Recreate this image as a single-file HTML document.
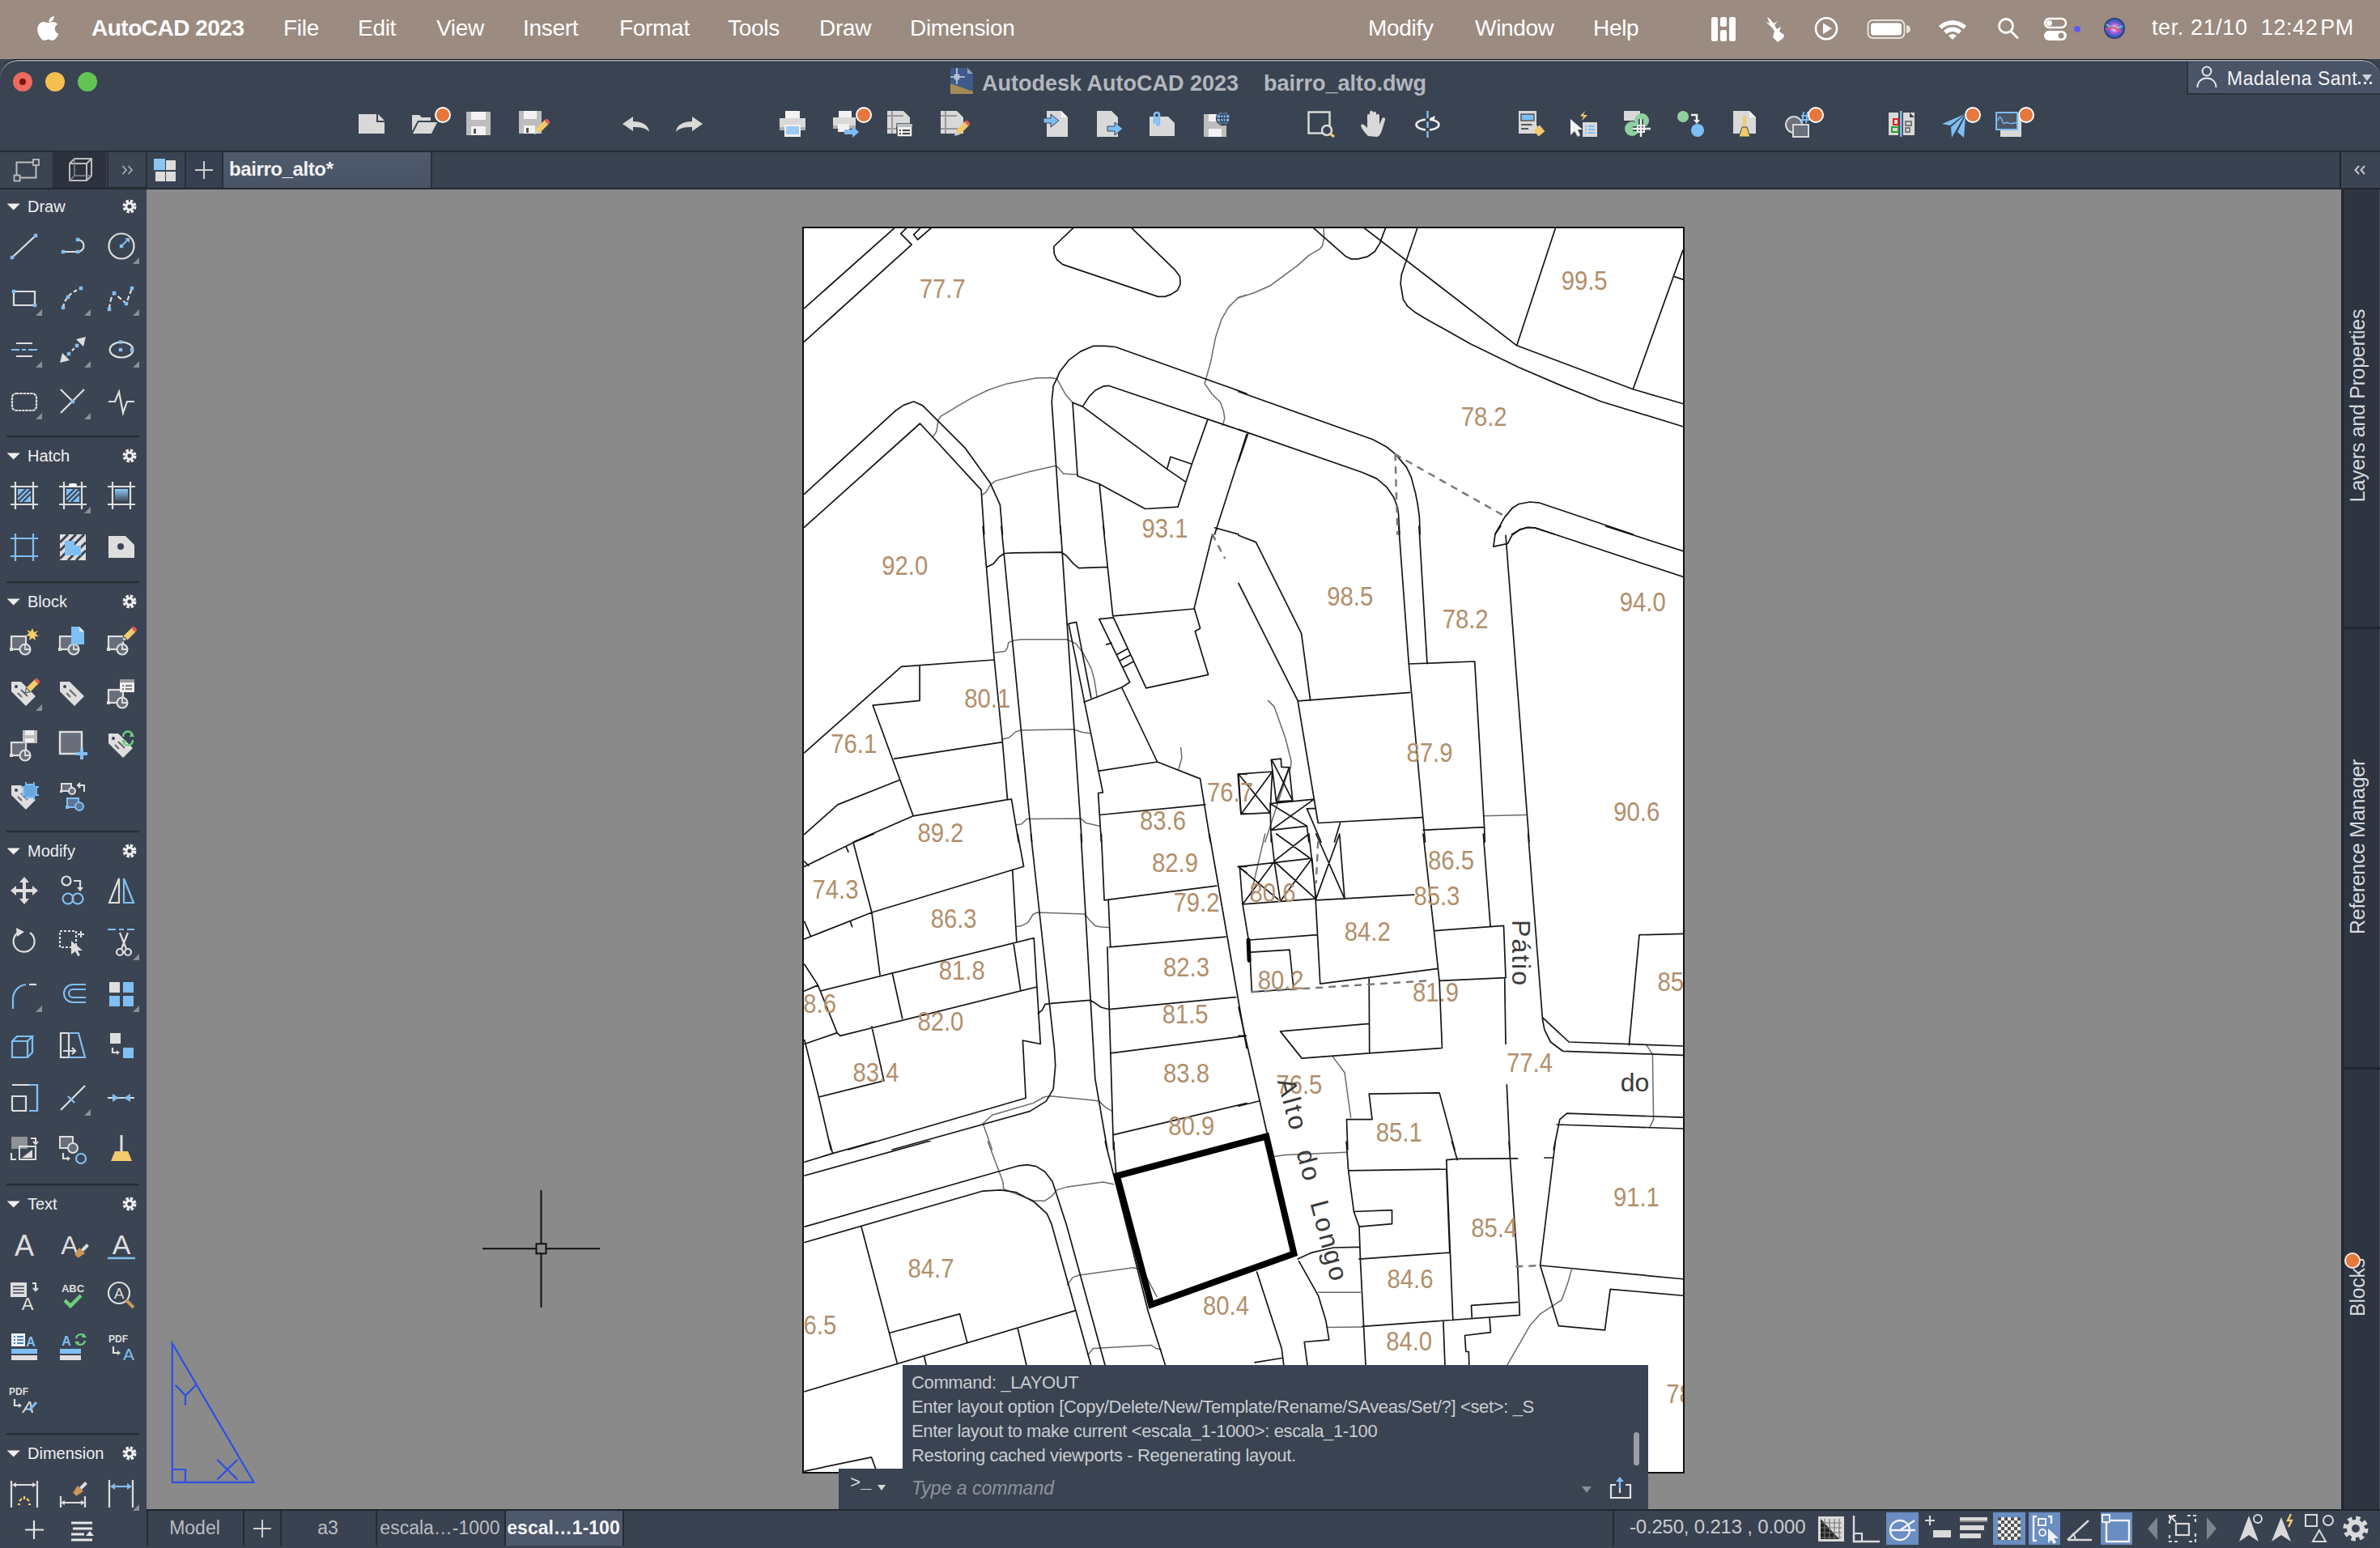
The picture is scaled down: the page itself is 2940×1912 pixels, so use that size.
<!DOCTYPE html>
<html><head><meta charset="utf-8">
<style>
*{margin:0;padding:0;box-sizing:border-box}
html,body{width:2940px;height:1912px;overflow:hidden;background:#3a4351;font-family:"Liberation Sans",sans-serif}
.a{position:absolute}
svg{overflow:visible}
#menubar{left:0;top:0;width:2940px;height:73px;background:#9b8b80;color:#fff;font-size:28px}
#menubar span{position:absolute;top:19px;white-space:nowrap;letter-spacing:-0.3px}
#win{left:0;top:73px;width:2940px;height:1839px;background:#3a4351;border-radius:22px 22px 0 0;border-top:1px solid #0a0a0a;box-shadow:inset 0 1px 0 #aeb5bf,inset 0 2px 0 #6a7280}
#title{top:88px;font-size:27px;font-weight:bold;color:#b3b7bf;white-space:nowrap}
#tbar{left:0;top:186px;width:2940px;height:2px;background:#242932}
#tabbar{left:0;top:188px;width:2892px;height:45px;background:#394250}
#tabline{left:0;top:232px;width:2940px;height:2px;background:#242932}
#canvas{left:181px;top:234px;width:2711px;height:1630px;background:#8a8a8a}
#left{left:0;top:234px;width:180px;height:1678px;background:#3b4452;border-radius:0 0 0 22px}
#rside{left:2892px;top:234px;width:48px;height:1630px;background:#2e3440;border-left:3px solid #212731;border-right:1px solid #4a505a}
#status{left:181px;top:1864px;width:2759px;height:48px;background:#394250;border-top:2px solid #20252d;border-radius:0 0 22px 0}
#paper{left:991px;top:280px;width:1090px;height:1540px;background:#fff;border:2px solid #111;overflow:hidden}
.sec{font-size:22px;color:#eef0f3;white-space:nowrap}
.sep{left:8px;width:164px;height:2px;background:#272c35}
.ico{position:absolute;width:40px;height:40px}
.cmdt{font-size:22px;color:#c9ccd2;white-space:nowrap;left:1126px}
.ltab{top:1866px;height:44px;background:#394250;border-left:2px solid #262b33;color:#b9bcc2;font-size:23px;text-align:center;line-height:44px;white-space:nowrap}
.sb{position:absolute;top:1868px;width:40px;height:40px}
.sba{background:#6b8fc4}
</style></head><body>
<div id="menubar" class="a">
  <svg class="a" style="left:45.5px;top:20px" width="28" height="34" viewBox="0 0 28 34"><path fill="#fff" d="M19.5 0c.3 2.3-.7 4.5-2 6-1.4 1.6-3.5 2.7-5.5 2.5-.3-2.2.8-4.5 2.1-5.9C15.5 1.1 17.8.1 19.5 0zM26 25.3c-.8 1.9-1.2 2.7-2.3 4.4-1.5 2.3-3.6 5.1-6.2 5.100-2.300 0-2.900-1.500-6-1.500s-3.800 1.500-6.100 1.500C2.800 34.800.8 32.300-.7 30-4.900 23.700-5.300 16.300-2.800 12.400-1 9.700 1.800 8 4.500 8c2.700 0 4.400 1.500 6.700 1.500 2.200 0 3.500-1.500 6.700-1.500 2.400 0 4.900 1.300 6.700 3.500-5.900 3.200-4.900 11.600 1.400 13.800z" transform="translate(4 0) scale(0.86)"/></svg>
  <span style="left:113px;font-weight:bold;letter-spacing:-0.5px">AutoCAD 2023</span>
  <span style="left:350px">File</span>
  <span style="left:442px">Edit</span>
  <span style="left:539px">View</span>
  <span style="left:646px">Insert</span>
  <span style="left:765px">Format</span>
  <span style="left:899px">Tools</span>
  <span style="left:1012px">Draw</span>
  <span style="left:1124px">Dimension</span>
  <span style="left:1690px">Modify</span>
  <span style="left:1822px">Window</span>
  <span style="left:1968px">Help</span>
  <span style="left:2658px;font-size:27px;letter-spacing:0.6px">ter. 21/10&nbsp;&nbsp;12:42&#8202;PM</span>
  <svg class="a" style="left:0;top:0" width="2940" height="73" viewBox="0 0 2940 73">
<rect x="2114" y="21" width="8" height="30" rx="2.5" fill="#ffffff"/><rect x="2136" y="21" width="8" height="30" rx="2.5" fill="#ffffff"/><rect x="2125" y="21" width="8" height="12" rx="2.5" fill="#ffffff"/><rect x="2125" y="37" width="8" height="14" rx="2.5" fill="#ffffff"/>
<path d="M2183 21L2186 29L2181 27L2188 33L2192 38L2190 46L2196 52L2203 47L2204 43L2198 39L2200 33L2195 36L2192 31L2196 26L2191 29L2187 24Z" fill="#ffffff"/>
<circle cx="2256" cy="35.3" r="13" fill="none" stroke="#ffffff" stroke-width="2.6"/><path d="M2252 28.5V42L2263 35.3Z" fill="#ffffff"/>
<rect x="2307.5" y="25" width="45" height="22" rx="6" fill="none" stroke="#e8e2dc" stroke-width="2"/><rect x="2311" y="28.5" width="38" height="15" rx="3.5" fill="#ffffff"/><path d="M2355 31V41A3 3 0 0 0 2355 31Z" fill="#e8e2dc"/>
<path d="M2395 32A25 25 0 0 1 2429 32L2425.5 36A20 20 0 0 0 2398.5 36Z" fill="#ffffff"/><path d="M2401 38A16 16 0 0 1 2423 38L2419.5 42A11 11 0 0 0 2404.5 42Z" fill="#ffffff"/><path d="M2407 44A7 7 0 0 1 2417 44L2412 49Z" fill="#ffffff"/>
<circle cx="2478" cy="32" r="8.5" fill="none" stroke="#ffffff" stroke-width="2.8"/><path d="M2484 38.5L2492 46.5" stroke="#ffffff" stroke-width="3" stroke-linecap="round"/>
<rect x="2526" y="23" width="26" height="11" rx="5.5" fill="none" stroke="#ffffff" stroke-width="2.4"/><circle cx="2531.5" cy="28.5" r="3.5" fill="#ffffff"/><rect x="2525" y="38" width="28" height="12" rx="6" fill="#ffffff"/><circle cx="2546" cy="44" r="3.5" fill="#9b8b80"/>
<circle cx="2566" cy="36" r="4" fill="#5f5cf0"/>
<defs><radialGradient id="siri" cx="0.5" cy="0.5" r="0.5"><stop offset="0" stop-color="#f0f0ff"/><stop offset="0.45" stop-color="#b05ad0"/><stop offset="0.8" stop-color="#2a5fc0"/><stop offset="1" stop-color="#3a2a60"/></radialGradient></defs><circle cx="2612" cy="35" r="13" fill="url(#siri)"/><path d="M2602 30Q2612 38 2622 32" stroke="#6fd0c0" stroke-width="2" fill="none"/><path d="M2601 37Q2610 30 2620 40" stroke="#e05080" stroke-width="2" fill="none"/>
</svg>
</div>
<div id="win" class="a"></div>
<!-- traffic lights -->
<div class="a" style="left:16px;top:89px;width:24px;height:24px;border-radius:50%;background:#ec6a5e"></div>
<div class="a" style="left:24px;top:97px;width:8px;height:8px;border-radius:50%;background:#7a1410"></div>
<div class="a" style="left:56px;top:89px;width:24px;height:24px;border-radius:50%;background:#f4bf4f"></div>
<div class="a" style="left:96px;top:89px;width:24px;height:24px;border-radius:50%;background:#61c554"></div>
<!-- title -->
<svg class="a" style="left:1174px;top:84px" width="28" height="32" viewBox="0 0 28 32"><path d="M0 0h21l7 7v25H0z" fill="#3d5a8a"/><path d="M0 19l28 10v3H0z" fill="#a48a55"/><path d="M0 21.5L28 31.5V32H0z" fill="#a48a55"/><path d="M8 0v20M0 11h18" stroke="#c8d2e0" stroke-width="1.6"/><rect x="5.5" y="8.5" width="5" height="5" fill="none" stroke="#c8d2e0" stroke-width="1.4"/><path d="M21 0v7h7" fill="#8fa3c0"/></svg>
<div id="title" class="a" style="left:1213px">Autodesk AutoCAD 2023</div>
<div id="title" class="a" style="left:1561px">bairro_alto.dwg</div>
<!-- user box -->
<div class="a" style="left:2701px;top:76px;width:239px;height:41px;background:#4a5467;border-left:2px solid #2c323c;border-bottom:2px solid #2c323c;border-radius:0 22px 0 0"></div>
<svg class="a" style="left:2712px;top:80px" width="28" height="30" viewBox="0 0 28 30"><circle cx="14" cy="8" r="5.5" fill="none" stroke="#e6e8ec" stroke-width="2"/><path d="M2.5 28c0-7 5-11.5 11.5-11.5S25.5 21 25.5 28" fill="none" stroke="#e6e8ec" stroke-width="2"/></svg>
<div class="a" style="left:2751px;top:84px;font-size:23px;color:#f2f3f5;white-space:nowrap;letter-spacing:0.5px">Madalena Sant</div>
<div class="a" style="left:2918px;top:92px;width:0;height:0;border-left:6px solid transparent;border-right:6px solid transparent;border-top:8px solid #d0d2d6"></div>
<div class="a" style="left:2913px;top:101px;width:3px;height:3px;background:#e6e8ec"></div>
<div class="a" style="left:2920px;top:101px;width:3px;height:3px;background:#e6e8ec"></div>
<div class="a" style="left:2927px;top:101px;width:3px;height:3px;background:#e6e8ec"></div>
<svg class="a" style="left:443.0px;top:141.0px" width="32" height="24" viewBox="0 0 32 24"><path d="M0 0H22V10H32V24H0Z" fill="#d9d9d9"/><path d="M24 0L32 8H24Z" fill="#d9d9d9"/></svg>
<svg class="a" style="left:509.0px;top:141.0px" width="32" height="24" viewBox="0 0 32 24"><path d="M0 1H9L12 4H23V8H7L0 21Z" fill="#d9d9d9"/><path d="M8 10H31L24 24H1Z" fill="#d9d9d9"/></svg>
<div class="a" style="left:537.0px;top:132.0px;width:20px;height:20px;border-radius:50%;background:#e6773d;border:2px solid #fff"></div>
<svg class="a" style="left:576.0px;top:138.0px" width="30" height="29" viewBox="0 0 30 29"><path d="M0 0H30V29H0Z" fill="#bdbdbd"/><rect x="6" y="0" width="18" height="10" fill="#f2f2f2"/><rect x="6" y="18" width="18" height="11" fill="#f2f2f2"/><rect x="9" y="21" width="3" height="6" fill="#555"/></svg>
<svg class="a" style="left:641.0px;top:137.0px" width="34" height="32" viewBox="0 0 34 32"><path d="M0 0H28V28H0Z" fill="#bdbdbd"/><rect x="6" y="0" width="16" height="10" fill="#f2f2f2"/><rect x="6" y="18" width="14" height="10" fill="#f2f2f2"/><rect x="9" y="21" width="3" height="6" fill="#555"/><g transform="translate(26 22) rotate(45)"><rect x="-3.5" y="-12" width="7" height="16" fill="#f2c96b"/><path d="M-3.5 4L0 10L3.5 4z" fill="#cfcfcf"/><rect x="-3.5" y="-15" width="7" height="4" rx="2" fill="#e45b5b"/></g></svg>
<svg class="a" style="left:769.0px;top:144.0px" width="33" height="19" viewBox="0 0 33 19"><path d="M0 9L13 0V6C24 6 32 10 33 19C29 14 23 13 13 13V18Z" fill="#d9d9d9"/></svg>
<svg class="a" style="left:835.0px;top:144.0px" width="33" height="19" viewBox="0 0 33 19"><path d="M33 9L20 0V6C9 6 1 10 0 19C4 14 10 13 20 13V18Z" fill="#d9d9d9"/></svg>
<svg class="a" style="left:963.0px;top:137.0px" width="32" height="32" viewBox="0 0 32 32"><rect x="7" y="0" width="18" height="9" fill="#f2f2f2"/><path d="M0 9H32V24H0Z" fill="#d9d9d9"/><rect x="0" y="20" width="32" height="4" fill="#b0b0b0"/><rect x="6" y="17" width="20" height="15" fill="#f2f2f2"/><rect x="8" y="19" width="16" height="10" fill="#9cc9f2"/></svg>
<svg class="a" style="left:1029.0px;top:137.0px" width="34" height="32" viewBox="0 0 34 32"><rect x="7" y="0" width="16" height="8" fill="#f2f2f2"/><path d="M0 8H28V22H0Z" fill="#d9d9d9"/><rect x="0" y="18" width="28" height="4" fill="#b0b0b0"/><rect x="6" y="16" width="14" height="10" fill="#f2f2f2"/><path d="M14 23H24V19L32 26L24 33V29H14Z" fill="#7dbdf5"/></svg>
<div class="a" style="left:1057.0px;top:132.0px;width:20px;height:20px;border-radius:50%;background:#e6773d;border:2px solid #fff"></div>
<svg class="a" style="left:1096.0px;top:137.0px" width="31" height="32" viewBox="0 0 31 32"><path d="M0 0H20L28 8V28H0Z" fill="#d9d9d9"/><path d="M6 0V28M0 6H20M0 22H28" stroke="#9a9a9a" stroke-width="2"/><rect x="12" y="16" width="19" height="16" fill="#f2f2f2" stroke="#3a4351" stroke-width="1.5"/><rect x="12" y="16" width="19" height="4" fill="#bdbdbd"/><path d="M15 24h2M19 24h9M15 28h2M19 28h9" stroke="#444" stroke-width="2"/></svg>
<svg class="a" style="left:1162.0px;top:137.0px" width="34" height="34" viewBox="0 0 34 34"><path d="M0 0H20L28 8V28H0Z" fill="#d9d9d9"/><path d="M6 0V28M0 6H20M0 22H28" stroke="#9a9a9a" stroke-width="2"/><g transform="translate(24 24) rotate(45)"><rect x="-3.5" y="-12" width="7" height="16" fill="#f2c96b"/><path d="M-3.5 4L0 10L3.5 4z" fill="#cfcfcf"/><rect x="-3.5" y="-15" width="7" height="4" rx="2" fill="#e45b5b"/></g></svg>
<svg class="a" style="left:1289.0px;top:137.0px" width="32" height="32" viewBox="0 0 32 32"><path d="M4 0H22L30 8V32H4Z" fill="#d9d9d9"/><path d="M22 0V8H30Z" fill="#f5f5f5"/><path d="M0 9H9V4L19 12L9 20V15H0Z" fill="#7dbdf5" stroke="#3a4351" stroke-width="1"/></svg>
<svg class="a" style="left:1355.0px;top:137.0px" width="33" height="32" viewBox="0 0 33 32"><path d="M0 0H18L26 8V32H0Z" fill="#d9d9d9"/><path d="M13 19H22V14L32 22L22 30V25H13Z" fill="#7dbdf5" stroke="#3a4351" stroke-width="1"/></svg>
<svg class="a" style="left:1420.0px;top:137.0px" width="33" height="32" viewBox="0 0 33 32"><path d="M0 7H23L31 15V31H0Z" fill="#d9d9d9"/><path d="M6 16V5C6 1 12 1 12 5V15C12 18 9 18 9 15V7" fill="none" stroke="#7dbdf5" stroke-width="2.5"/></svg>
<svg class="a" style="left:1487.0px;top:137.0px" width="34" height="32" viewBox="0 0 34 32"><path d="M0 4H28V32H0Z" fill="#bdbdbd"/><rect x="6" y="4" width="12" height="9" fill="#f2f2f2"/><rect x="6" y="22" width="16" height="10" fill="#f2f2f2"/><circle cx="24" cy="9" r="8.5" fill="#7dbdf5" stroke="#3a4351" stroke-width="1.5"/><path d="M16 9H32M24 1V17M18 4.5H30M18 13.5H30" stroke="#3a4351" stroke-width="1.4"/><ellipse cx="24" cy="9" rx="3.5" ry="8" fill="none" stroke="#3a4351" stroke-width="1.4"/></svg>
<svg class="a" style="left:1615.0px;top:137.0px" width="33" height="32" viewBox="0 0 33 32"><rect x="1.5" y="1.5" width="26" height="26" fill="none" stroke="#d9d9d9" stroke-width="2.5"/><circle cx="24" cy="24" r="6" fill="#3a4351" stroke="#d9d9d9" stroke-width="2.5"/><path d="M28 28L33 32" stroke="#f2c96b" stroke-width="3"/></svg>
<svg class="a" style="left:1681.0px;top:137.0px" width="33" height="32" viewBox="0 0 33 32"><path d="M9 31C5 27 1 22 0 18C1 16 3 16 5 18L8 21V6C8 3 11 3 11 6V15V2C11 -1 15 -1 15 2V15V3C15 0 19 0 19 3V15V6C19 3 23 3 23 6V17L26 10C27 7 31 8 30 11L26 24C25 28 23 31 20 32Z" fill="#d9d9d9"/></svg>
<svg class="a" style="left:1748.0px;top:137.0px" width="31" height="33" viewBox="0 0 31 33"><ellipse cx="15.5" cy="17" rx="14" ry="6.5" fill="none" stroke="#f2f2f2" stroke-width="2.5"/><path d="M15.5 0V33" stroke="#7dbdf5" stroke-width="2.5"/><path d="M18 9L25 6L23 13" fill="#f2f2f2"/><rect x="13" y="9" width="5" height="4" fill="#3a4351"/><rect x="13" y="21" width="5" height="4" fill="#3a4351"/></svg>
<svg class="a" style="left:1876.0px;top:137.0px" width="32" height="32" viewBox="0 0 32 32"><rect x="0" y="0" width="22" height="28" fill="#d9d9d9"/><rect x="3" y="4" width="16" height="8" fill="#7dbdf5" stroke="#555" stroke-width="1.5"/><path d="M3 17H19M3 22H12" stroke="#555" stroke-width="2"/><g transform="translate(24 23) rotate(-40)"><rect x="-5" y="-3" width="10" height="10" fill="#f2c96b"/><rect x="-2" y="-12" width="4" height="9" fill="#d9d9d9"/></g></svg>
<svg class="a" style="left:1940.0px;top:137.0px" width="33" height="32" viewBox="0 0 33 32"><path d="M0 10V30L5 25L9 32L12 30L9 23H15Z" fill="#f2f2f2"/><path d="M12 6L18 0L16 5H21L14 12L16 7Z" fill="#f2c96b"/><rect x="15" y="14" width="18" height="18" fill="#d9d9d9"/><path d="M18 19h2M22 19h8M18 23h2M22 23h8M18 27h2M22 27h8" stroke="#7dbdf5" stroke-width="2"/></svg>
<svg class="a" style="left:2006.0px;top:137.0px" width="33" height="32" viewBox="0 0 33 32"><path d="M0 0H20V12H0Z" fill="#d9d9d9"/><circle cx="22" cy="12" r="9" fill="#8fd19e"/><circle cx="10" cy="22" r="9" fill="#8fd19e"/><path d="M21 10V32M11 22H33" stroke="#3a4351" stroke-width="6"/><path d="M21 10V32M11 22H33" stroke="#f2f2f2" stroke-width="2.5"/><rect x="17" y="18" width="8" height="8" fill="none" stroke="#f2f2f2" stroke-width="2"/></svg>
<svg class="a" style="left:2072.0px;top:137.0px" width="34" height="32" viewBox="0 0 34 32"><circle cx="7" cy="7" r="7" fill="#8fd19e"/><path d="M17 5H24V12" fill="none" stroke="#f2f2f2" stroke-width="2.5"/><path d="M20 11L24 16L28 11Z" fill="#f2f2f2"/><circle cx="25" cy="24" r="8" fill="#7dbdf5"/></svg>
<svg class="a" style="left:2141.0px;top:137.0px" width="29" height="32" viewBox="0 0 29 32"><path d="M0 0H20L28 8V28H0Z" fill="#d9d9d9"/><path d="M20 0V8H28Z" fill="#f2f2f2"/><path d="M12 6H16V20H12Z" fill="#f2c96b"/><path d="M7 32L11 20H17L21 32Z" fill="#f2c96b" stroke="#3a4351" stroke-width="1"/></svg>
<svg class="a" style="left:2204.0px;top:136.0px" width="34" height="34" viewBox="0 0 34 34"><circle cx="12" cy="18" r="10" fill="#6a707c" stroke="#d9d9d9" stroke-width="2"/><rect x="11" y="18" width="19" height="15" fill="#6a707c" stroke="#d9d9d9" stroke-width="2"/><path d="M21 7H31M21 12H31M24 2L22 16M29 2L27 16" stroke="#7dbdf5" stroke-width="2"/></svg>
<div class="a" style="left:2233.0px;top:132.0px;width:20px;height:20px;border-radius:50%;background:#e6773d;border:2px solid #fff"></div>
<svg class="a" style="left:2333.0px;top:137.0px" width="33" height="32" viewBox="0 0 33 32"><rect x="0" y="2" width="12" height="28" fill="#d9d9d9"/><rect x="18" y="2" width="14" height="28" fill="#d9d9d9"/><path d="M26 2L32 8H26Z" fill="#3a4351"/><rect x="14" y="0" width="2.5" height="32" fill="#7dbdf5"/><rect x="6" y="10" width="6" height="7" fill="none" stroke="#e02020" stroke-width="2"/><rect x="4" y="20" width="8" height="6" fill="none" stroke="#30a030" stroke-width="2"/><rect x="21" y="13" width="7" height="5" fill="none" stroke="#777" stroke-width="2"/><rect x="21" y="21" width="5" height="5" fill="none" stroke="#777" stroke-width="2"/></svg>
<svg class="a" style="left:2399.0px;top:137.0px" width="38" height="32" viewBox="0 0 38 32"><path d="M0 16L28 4L10 18Z" fill="#7dbdf5"/><path d="M11 20L28 5L12 33Z" fill="#7dbdf5"/><path d="M19 26L29 6L27 33Z" fill="#7dbdf5"/></svg>
<div class="a" style="left:2427.0px;top:132.0px;width:20px;height:20px;border-radius:50%;background:#e6773d;border:2px solid #fff"></div>
<svg class="a" style="left:2465.0px;top:137.0px" width="34" height="32" viewBox="0 0 34 32"><rect x="6" y="8" width="26" height="24" fill="#d9d9d9"/><rect x="1" y="2" width="26" height="21" fill="#4d5564" stroke="#7dbdf5" stroke-width="2"/><path d="M3 12C5 4 7 8 9 14C11 18 13 12 16 15C19 17 22 14 26 15" fill="none" stroke="#7dbdf5" stroke-width="1.5"/></svg>
<div class="a" style="left:2493.0px;top:132.0px;width:20px;height:20px;border-radius:50%;background:#e6773d;border:2px solid #fff"></div>
<div id="tbar" class="a"></div>
<div id="tabbar" class="a"></div>
<div class="a" style="left:0;top:188px;width:64px;height:45px;background:#3b4452"></div>
<div class="a" style="left:65px;top:188px;width:66px;height:45px;background:#2d333e;border-bottom:2px solid #242932"></div>
<div class="a" style="left:132px;top:188px;width:48px;height:45px;background:#3b4452;border-left:2px solid #2a2f38;border-bottom:2px solid #242932"></div>
<svg class="a" style="left:17px;top:197px" width="32" height="26" viewBox="0 0 32 26"><rect x="3.5" y="3.5" width="24" height="19" fill="none" stroke="#bdbdbd" stroke-width="2"/><rect x="24" y="0" width="7" height="7" fill="#3b4452" stroke="#bdbdbd" stroke-width="1.8"/><rect x="0.5" y="19.5" width="7" height="7" fill="#3b4452" stroke="#bdbdbd" stroke-width="1.8"/></svg>
<svg class="a" style="left:85px;top:195px" width="30" height="30" viewBox="0 0 30 30"><path d="M1 7L7 1H28V22L22 28H1Z M1 7H22V28 M22 7L28 1" fill="none" stroke="#bdbdbd" stroke-width="2"/><path d="M7 1V22H28 M7 22L1 28" fill="none" stroke="#8a8a8a" stroke-width="1.5"/></svg>
<svg class="a" style="left:150px;top:204px" width="16" height="12" viewBox="0 0 16 12"><path d="M1.5 1L6 6L1.5 11M8.5 1L13 6L8.5 11" fill="none" stroke="#a9acb2" stroke-width="1.8"/></svg>
<div class="a" style="left:180px;top:188px;width:2px;height:45px;background:#2a2f38"></div>
<div class="a" style="left:182px;top:188px;width:46px;height:45px;background:#3a4351"></div>
<div class="a" style="left:228px;top:188px;width:2px;height:45px;background:#2a2f38"></div>
<svg class="a" style="left:190px;top:196px" width="29" height="29" viewBox="0 0 29 29"><rect x="0" y="0" width="14" height="14" fill="#8cc4f0"/><rect x="15" y="2" width="12" height="12" fill="#dcdcdc"/><rect x="2" y="16" width="12" height="12" fill="#dcdcdc"/><rect x="15" y="16" width="12" height="12" fill="#dcdcdc"/></svg>
<div class="a" style="left:230px;top:188px;width:44px;height:45px;background:#374050"></div>
<div class="a" style="left:274px;top:188px;width:2px;height:45px;background:#2a2f38"></div>
<svg class="a" style="left:241px;top:199px" width="22" height="22" viewBox="0 0 22 22"><path d="M11 0V22M0 11H22" stroke="#d0d0d0" stroke-width="2"/></svg>
<div class="a" style="left:276px;top:188px;width:256px;height:44px;background:linear-gradient(#4f5a6d,#485366)"></div>
<div class="a" style="left:532px;top:188px;width:2px;height:45px;background:#2a2f38"></div>
<div class="a" style="left:283px;top:195px;font-size:24px;font-weight:bold;color:#f2f3f5;white-space:nowrap;letter-spacing:-0.4px">bairro_alto*</div>
<div class="a" style="left:2890px;top:188px;width:2px;height:45px;background:#20252e"></div>
<div class="a" style="left:2892px;top:188px;width:48px;height:44px;background:#3b4452"></div>
<svg class="a" style="left:2908px;top:204px" width="16" height="12" viewBox="0 0 16 12"><path d="M6 1L1.5 6L6 11M13 1L8.5 6L13 11" fill="none" stroke="#c4c6ca" stroke-width="2"/></svg>
<div id="tabline" class="a"></div>
<div id="canvas" class="a"></div>
<div id="left" class="a"></div>
<svg class="a" style="left:0;top:0" width="180" height="1912" viewBox="0 0 180 1912">
<path d="M8.6 251.5H24.8L16.7 259.5Z" fill="#f0f0f0"/>
<text x="34" y="262.0" font-family="Liberation Sans" font-size="20" fill="#eef0f3">Draw</text>
<g transform="translate(160 255.0)"><circle r="6.5" fill="none" stroke="#f0f0f0" stroke-width="4" stroke-dasharray="3.2 1.9"/><circle r="5.5" fill="#f0f0f0"/><circle r="2.6" fill="#3b4452"/></g>
<g transform="translate(10.0 284.0)"><path d="M5 34L34 7" stroke="#dedede" stroke-width="2.2" fill="none"/><rect x="2.8" y="31.8" width="4.4" height="4.4" fill="#80bff3"/><rect x="31.8" y="4.8" width="4.4" height="4.4" fill="#80bff3"/></g>
<g transform="translate(70.0 284.0)"><path d="M8 27H26M26 12A7.5 7.5 0 0 1 26 27" stroke="#dedede" stroke-width="2.2" fill="none"/><rect x="5.8" y="24.8" width="4.4" height="4.4" fill="#80bff3"/><rect x="23.8" y="24.8" width="4.4" height="4.4" fill="#80bff3"/><rect x="23.8" y="9.8" width="4.4" height="4.4" fill="#80bff3"/></g>
<g transform="translate(130.0 284.0)"><circle cx="20" cy="20" r="15.5" stroke="#dedede" stroke-width="2.2" fill="none"/><path d="M21 19L28 12" stroke="#80bff3" stroke-width="2"/><path d="M24 10H30V16Z" fill="#80bff3"/><rect x="17.8" y="17.8" width="4.4" height="4.4" fill="#80bff3"/><path d="M42 34V42H34Z" fill="#8c8f94"/></g>
<g transform="translate(10.0 348.0)"><path d="M7 12H33V29H7Z" stroke="#dedede" stroke-width="2.2" fill="none"/><rect x="4.8" y="9.8" width="4.4" height="4.4" fill="#80bff3"/><rect x="30.8" y="26.8" width="4.4" height="4.4" fill="#80bff3"/><path d="M42 34V42H34Z" fill="#8c8f94"/></g>
<g transform="translate(70.0 348.0)"><path d="M8 32Q10 16 30 8" stroke="#dedede" stroke-width="2.2" fill="none" stroke-dasharray="5 3"/><rect x="5.8" y="29.8" width="4.4" height="4.4" fill="#80bff3"/><rect x="11.8" y="16.8" width="4.4" height="4.4" fill="#80bff3"/><rect x="27.8" y="5.8" width="4.4" height="4.4" fill="#80bff3"/><path d="M42 34V42H34Z" fill="#8c8f94"/></g>
<g transform="translate(130.0 348.0)"><path d="M5 34Q6 20 11 14L26 27L33 8" stroke="#dedede" stroke-width="2.2" fill="none" stroke-dasharray="6 3"/><rect x="2.8" y="31.8" width="4.4" height="4.4" fill="#80bff3"/><rect x="8.8" y="11.8" width="4.4" height="4.4" fill="#80bff3"/><rect x="23.8" y="24.8" width="4.4" height="4.4" fill="#80bff3"/><rect x="30.8" y="5.8" width="4.4" height="4.4" fill="#80bff3"/><path d="M42 34V42H34Z" fill="#8c8f94"/></g>
<g transform="translate(10.0 412.0)"><path d="M10 12H30M10 28H30" stroke="#dedede" stroke-width="2.2" fill="none"/><path d="M4 20H14M17 20H22M25 20H36" stroke="#80bff3" stroke-width="2.2" fill="none"/><path d="M42 34V42H34Z" fill="#8c8f94"/></g>
<g transform="translate(70.0 412.0)"><path d="M9 31L31 9" stroke="#dedede" stroke-width="2.2" fill="none" stroke-dasharray="4 3"/><path d="M4 36L7 24L16 33Z" fill="#dedede"/><path d="M36 4L33 16L24 7Z" fill="#dedede"/><rect x="12.8" y="22.8" width="4.4" height="4.4" fill="#80bff3"/><rect x="22.8" y="12.8" width="4.4" height="4.4" fill="#80bff3"/><path d="M42 34V42H34Z" fill="#8c8f94"/></g>
<g transform="translate(130.0 412.0)"><ellipse cx="20" cy="20" rx="14.3" ry="9.5" stroke="#dedede" stroke-width="2.2" fill="none"/><rect x="16.8" y="8.3" width="4.4" height="4.4" fill="#80bff3"/><rect x="16.8" y="17.8" width="4.4" height="4.4" fill="#80bff3"/><rect x="30.8" y="17.8" width="4.4" height="4.4" fill="#80bff3"/><path d="M42 34V42H34Z" fill="#8c8f94"/></g>
<g transform="translate(10.0 476.0)"><rect x="5" y="10" width="30" height="21" rx="5" stroke="#dedede" stroke-width="2.2" fill="none" stroke-dasharray="3.5 0.8"/><path d="M42 34V42H34Z" fill="#8c8f94"/></g>
<g transform="translate(70.0 476.0)"><path d="M5 5L19 19M34 5L5 34" stroke="#dedede" stroke-width="2.2" fill="none"/><rect x="17.8" y="17.8" width="4.4" height="4.4" fill="#80bff3"/><path d="M42 34V42H34Z" fill="#8c8f94"/></g>
<g transform="translate(130.0 476.0)"><path d="M4 20H12L17 8L22 34L27 20H36" stroke="#dedede" stroke-width="2.2" fill="none"/></g>
<rect x="8" y="538.0" width="164" height="2.2" fill="#262b34"/>
<path d="M8.6 559.5H24.8L16.7 567.5Z" fill="#f0f0f0"/>
<text x="34" y="570.0" font-family="Liberation Sans" font-size="20" fill="#eef0f3">Hatch</text>
<g transform="translate(160 563.0)"><circle r="6.5" fill="none" stroke="#f0f0f0" stroke-width="4" stroke-dasharray="3.2 1.9"/><circle r="5.5" fill="#f0f0f0"/><circle r="2.6" fill="#3b4452"/></g>
<g transform="translate(10.0 592.0)"><path d="M9 3V37M31 3V37M3 9H37M3 31H37" stroke="#dedede" stroke-width="2.2"/><rect x="12" y="12" width="16" height="16" fill="#80bff3"/><path d="M12 22L22 12M12 28L28 12M18 28L28 18" stroke="#3b4452" stroke-width="2"/></g>
<g transform="translate(70.0 592.0)"><path d="M9 3V37M31 3V37M3 9H37M3 31H37" stroke="#dedede" stroke-width="2.2"/><rect x="12" y="12" width="16" height="16" fill="#80bff3"/><path d="M12 22L22 12M12 28L28 12M18 28L28 18" stroke="#3b4452" stroke-width="2"/><rect x="15" y="5" width="10" height="4" rx="2" fill="#fff"/><path d="M42 34V42H34Z" fill="#8c8f94"/></g>
<g transform="translate(130.0 592.0)"><path d="M9 3V37M31 3V37M3 9H37M3 31H37" stroke="#dedede" stroke-width="2.2"/><defs><linearGradient id="gr" x1="0" y1="0" x2="0" y2="1"><stop offset="0" stop-color="#8ccaf7"/><stop offset="1" stop-color="#3b4452"/></linearGradient></defs><rect x="12" y="12" width="16" height="16" fill="url(#gr)"/></g>
<g transform="translate(70.0 656.0)"><rect x="4" y="4" width="32" height="32" fill="#dedede"/><path d="M4 14L14 4M4 24L24 4M4 34L34 4M14 36L36 14M24 36L36 24" stroke="#3b4452" stroke-width="3"/><path d="M10 12H22V18H30V30H10Z" fill="#80bff3"/></g>
<g transform="translate(10.0 656.0)"><path d="M9 3V37M31 3V37M3 9H37M3 31H37" stroke="#80bff3" stroke-width="2.2"/></g>
<g transform="translate(130.0 656.0)"><path d="M4 6H25L36 17V33H4Z" fill="#dedede"/><circle cx="19" cy="19" r="4" fill="#3b4452"/></g>
<rect x="8" y="718.0" width="164" height="2.2" fill="#262b34"/>
<path d="M8.6 739.5H24.8L16.7 747.5Z" fill="#f0f0f0"/>
<text x="34" y="750.0" font-family="Liberation Sans" font-size="20" fill="#eef0f3">Block</text>
<g transform="translate(160 743.0)"><circle r="6.5" fill="none" stroke="#f0f0f0" stroke-width="4" stroke-dasharray="3.2 1.9"/><circle r="5.5" fill="#f0f0f0"/><circle r="2.6" fill="#3b4452"/></g>
<g transform="translate(10.0 772.0)"><g transform="translate(0 0)"><rect x="4" y="14" width="18" height="16" fill="#686e7a" stroke="#dedede" stroke-width="2.2"/><rect x="2" y="28" width="4" height="4" fill="#dedede"/><circle cx="21" cy="30" r="6.5" fill="#686e7a" stroke="#dedede" stroke-width="2.2"/><path d="M21 23.5V30H27.5" stroke="#dedede" stroke-width="1.8" fill="none"/></g><path d="M30 4L32 9L37 7L34 11L38 14L33 14L34 19L30 16L26 19L27 14L22 13L26 10L23 6L28 8Z" fill="#f3cb6c"/></g>
<g transform="translate(70.0 772.0)"><g transform="translate(0 0)"><rect x="4" y="14" width="18" height="16" fill="#686e7a" stroke="#dedede" stroke-width="2.2"/><rect x="2" y="28" width="4" height="4" fill="#dedede"/><circle cx="21" cy="30" r="6.5" fill="#686e7a" stroke="#dedede" stroke-width="2.2"/><path d="M21 23.5V30H27.5" stroke="#dedede" stroke-width="1.8" fill="none"/></g><path d="M18 2H28L34 8V24H18Z" fill="#80bff3"/><path d="M28 2V8H34Z" fill="#d8ecfb"/></g>
<g transform="translate(130.0 772.0)"><g transform="translate(0 0)"><rect x="4" y="14" width="18" height="16" fill="#686e7a" stroke="#dedede" stroke-width="2.2"/><rect x="2" y="28" width="4" height="4" fill="#dedede"/><circle cx="21" cy="30" r="6.5" fill="#686e7a" stroke="#dedede" stroke-width="2.2"/><path d="M21 23.5V30H27.5" stroke="#dedede" stroke-width="1.8" fill="none"/></g><g transform="translate(29 12) rotate(45)"><rect x="-3.5" y="-9" width="7" height="15" fill="#f3cb6c"/><path d="M-3.5 6L0 11L3.5 6z" fill="#ddd" stroke="#3b4452" stroke-width="1"/><rect x="-3.5" y="-12" width="7" height="4" rx="2" fill="#e25a5a"/></g></g>
<g transform="translate(10.0 836.0)"><g transform="translate(0 0)"><path d="M4 6H16L34 24L22 36L4 18Z" fill="#dedede"/><circle cx="10" cy="12" r="2" fill="#3b4452"/><path d="M12 20L17 25M16 16L24 24" stroke="#666" stroke-width="2"/></g><g transform="translate(29 12) rotate(45)"><rect x="-3.5" y="-9" width="7" height="15" fill="#f3cb6c"/><path d="M-3.5 6L0 11L3.5 6z" fill="#ddd" stroke="#3b4452" stroke-width="1"/><rect x="-3.5" y="-12" width="7" height="4" rx="2" fill="#e25a5a"/></g><path d="M42 34V42H34Z" fill="#8c8f94"/></g>
<g transform="translate(70.0 836.0)"><g transform="translate(0 0)"><path d="M4 6H16L34 24L22 36L4 18Z" fill="#dedede"/><circle cx="10" cy="12" r="2" fill="#3b4452"/><path d="M12 20L17 25M16 16L24 24" stroke="#666" stroke-width="2"/></g></g>
<g transform="translate(130.0 836.0)"><g transform="translate(0 2)"><rect x="4" y="14" width="18" height="16" fill="#686e7a" stroke="#dedede" stroke-width="2.2"/><rect x="2" y="28" width="4" height="4" fill="#dedede"/><circle cx="21" cy="30" r="6.5" fill="#686e7a" stroke="#dedede" stroke-width="2.2"/><path d="M21 23.5V30H27.5" stroke="#dedede" stroke-width="1.8" fill="none"/></g><rect x="18" y="3" width="18" height="16" fill="#eee"/><rect x="18" y="3" width="18" height="4" fill="#999"/><path d="M21 11h2M25 11h8M21 15h2M25 15h8" stroke="#555" stroke-width="1.6"/></g>
<g transform="translate(10.0 900.0)"><g transform="translate(0 3)"><rect x="4" y="14" width="18" height="16" fill="#686e7a" stroke="#dedede" stroke-width="2.2"/><rect x="2" y="28" width="4" height="4" fill="#dedede"/><circle cx="21" cy="30" r="6.5" fill="#686e7a" stroke="#dedede" stroke-width="2.2"/><path d="M21 23.5V30H27.5" stroke="#dedede" stroke-width="1.8" fill="none"/></g><rect x="18" y="2" width="18" height="16" fill="#bdbdbd"/><rect x="21" y="2" width="11" height="6" fill="#eee"/><rect x="21" y="12" width="11" height="5" fill="#eee"/></g>
<g transform="translate(70.0 900.0)"><rect x="4" y="4" width="27" height="27" fill="#686e7a" stroke="#dedede" stroke-width="2.4"/><path d="M31 24V38M24 31H38" stroke="#80bff3" stroke-width="4"/></g>
<g transform="translate(130.0 900.0)"><g transform="translate(0 0)"><path d="M4 6H16L34 24L22 36L4 18Z" fill="#dedede"/><circle cx="10" cy="12" r="2" fill="#3b4452"/><path d="M12 20L17 25M16 16L24 24" stroke="#666" stroke-width="2"/></g><path d="M22 10A6 6 0 0 1 34 9M34 14A6 6 0 0 1 22 15" stroke="#6fcf7f" stroke-width="2.4" fill="none"/><path d="M32 5L36 10L30 10Z M24 19L20 14L26 14Z" fill="#6fcf7f"/></g>
<g transform="translate(10.0 964.0)"><g transform="translate(0 0)"><path d="M4 6H16L34 24L22 36L4 18Z" fill="#dedede"/><circle cx="10" cy="12" r="2" fill="#3b4452"/><path d="M12 20L17 25M16 16L24 24" stroke="#666" stroke-width="2"/></g><rect x="20" y="6" width="14" height="14" fill="#68a8e0"/><path d="M22 2V5H32V2M22 24V21H32V24M16 8H19V18H16M38 8H35V18H38" fill="none" stroke="#80bff3" stroke-width="1.8"/></g>
<g transform="translate(70.0 964.0)"><rect x="6" y="4" width="12" height="9" fill="#686e7a" stroke="#dedede" stroke-width="2"/><rect x="4" y="12" width="3" height="3" fill="#dedede"/><circle cx="19" cy="13" r="4" fill="#686e7a" stroke="#dedede" stroke-width="2"/><path d="M34 14V6H26M29 3L26 6L29 9" stroke="#dedede" stroke-width="2" fill="none"/><rect x="13" y="22" width="14" height="11" fill="#5d7494" stroke="#80bff3" stroke-width="2"/><rect x="11" y="31" width="4" height="4" fill="#80bff3"/><circle cx="28" cy="32" r="5" fill="#5d7494" stroke="#80bff3" stroke-width="2"/></g>
<rect x="8" y="1026.0" width="164" height="2.2" fill="#262b34"/>
<path d="M8.6 1047.5H24.8L16.7 1055.5Z" fill="#f0f0f0"/>
<text x="34" y="1058.0" font-family="Liberation Sans" font-size="20" fill="#eef0f3">Modify</text>
<g transform="translate(160 1051.0)"><circle r="6.5" fill="none" stroke="#f0f0f0" stroke-width="4" stroke-dasharray="3.2 1.9"/><circle r="5.5" fill="#f0f0f0"/><circle r="2.6" fill="#3b4452"/></g>
<g transform="translate(10.0 1080.0)"><path d="M20 3L26 10H22V18H30V14L37 20L30 26V22H22V30H26L20 37L14 30H18V22H10V26L3 20L10 14V18H18V10H14Z" fill="#dedede"/></g>
<g transform="translate(70.0 1080.0)"><circle cx="12" cy="8" r="5.5" stroke="#dedede" stroke-width="2.2" fill="none"/><path d="M21 8H29V18" stroke="#dedede" stroke-width="2.2" fill="none"/><path d="M25 16L29 21L33 16Z" fill="#dedede"/><circle cx="14" cy="30" r="6.5" stroke="#80bff3" stroke-width="2.2" fill="none"/><circle cx="26" cy="30" r="6.5" stroke="#80bff3" stroke-width="2.2" fill="none"/></g>
<g transform="translate(130.0 1080.0)"><path d="M5 35L17 5V35Z" stroke="#dedede" stroke-width="2.2" fill="none"/><path d="M23 35V5L35 35Z" stroke="#80bff3" stroke-width="2.2" fill="none"/></g>
<g transform="translate(10.0 1144.0)"><path d="M27 8A13 13 0 1 1 13 7.5" stroke="#dedede" stroke-width="2.2" fill="none" stroke-width="2.4"/><path d="M10 2L20 7L11 13Z" fill="#dedede"/></g>
<g transform="translate(70.0 1144.0)"><rect x="4" y="6" width="20" height="20" stroke="#dedede" stroke-width="2.2" fill="none" stroke-dasharray="3 2"/><path d="M18 18L32 30L26 30L29 36L26 37L23 31L18 35Z" fill="#dedede"/><path d="M30 6V14M26 10H34" stroke="#dedede" stroke-width="2"/></g>
<g transform="translate(130.0 1144.0)"><path d="M3 4H13M17 4H23M27 4H36" stroke="#80bff3" stroke-width="2"/><path d="M18 8L26 28M28 8L20 28" stroke="#dedede" stroke-width="2.2" fill="none"/><circle cx="18" cy="32" r="4" stroke="#dedede" stroke-width="2.2" fill="none"/><circle cx="28" cy="32" r="4" stroke="#dedede" stroke-width="2.2" fill="none"/><path d="M42 34V42H34Z" fill="#8c8f94"/></g>
<g transform="translate(10.0 1208.0)"><path d="M6 38V26A18 18 0 0 1 22 8" stroke="#80bff3" stroke-width="2.2" fill="none"/><path d="M26 8H35" stroke="#dedede" stroke-width="2.2" fill="none"/><path d="M42 34V42H34Z" fill="#8c8f94"/></g>
<g transform="translate(70.0 1208.0)"><path d="M36 8H20A11 11 0 0 0 20 30H36M36 14H20A5 5 0 0 0 20 24H36" stroke="#80bff3" stroke-width="2.2" fill="none"/></g>
<g transform="translate(130.0 1208.0)"><rect x="5" y="5" width="13" height="13" fill="#dedede"/><rect x="22" y="5" width="13" height="13" fill="#80bff3"/><rect x="5" y="22" width="13" height="13" fill="#80bff3"/><rect x="22" y="22" width="13" height="13" fill="#80bff3"/><path d="M42 34V42H34Z" fill="#8c8f94"/></g>
<g transform="translate(10.0 1272.0)"><path d="M5 14H24V34H5Z M5 14L11 8H30L24 14M30 8V28L24 34" stroke="#80bff3" stroke-width="2.2" fill="none"/></g>
<g transform="translate(70.0 1272.0)"><path d="M5 4H15V34H5Z" stroke="#dedede" stroke-width="2.2" fill="none"/><path d="M15 4H27L35 34H15" stroke="#80bff3" stroke-width="2.2" fill="none"/><path d="M8 26H22M19 22L23 26L19 30" stroke="#dedede" stroke-width="2.2" fill="none"/></g>
<g transform="translate(130.0 1272.0)"><rect x="6" y="4" width="13" height="13" fill="#dedede"/><path d="M9 22V28H17" stroke="#dedede" stroke-width="2.2" fill="none"/><path d="M14 25L18 28L14 31Z" fill="#dedede"/><rect x="22" y="22" width="13" height="13" fill="#80bff3"/></g>
<g transform="translate(10.0 1336.0)"><path d="M5 36V18H22V36H5M5 4H36V36H26" stroke="#dedede" stroke-width="2.2" fill="none"/><path d="M26 4H36V36H26" stroke="#80bff3" stroke-width="2.2" fill="none"/></g>
<g transform="translate(70.0 1336.0)"><path d="M5 35L35 5" stroke="#dedede" stroke-width="2.2" fill="none"/><path d="M14 18L22 26" stroke="#80bff3" stroke-width="2.4"/><path d="M42 34V42H34Z" fill="#8c8f94"/></g>
<g transform="translate(130.0 1336.0)"><path d="M3 20H36" stroke="#dedede" stroke-width="2"/><path d="M9 15L17 20L9 25Z M31 15L23 20L31 25Z" fill="#80bff3"/></g>
<g transform="translate(10.0 1400.0)"><rect x="4" y="4" width="20" height="15" fill="#8e9196"/><rect x="14" y="16" width="20" height="16" fill="none" stroke="#dedede" stroke-width="2"/><path d="M17 30L30 20V30Z" fill="#dedede"/><path d="M28 6H34V12M31 10L34 13L37 10 M4 24V32H10" stroke="#dedede" stroke-width="2" fill="none"/></g>
<g transform="translate(70.0 1400.0)"><rect x="4" y="4" width="16" height="14" fill="#686e7a" stroke="#dedede" stroke-width="2"/><circle cx="20" cy="18" r="6" fill="#686e7a" stroke="#dedede" stroke-width="2"/><path d="M8 24V31H16" stroke="#dedede" stroke-width="2.2" fill="none"/><path d="M13 28L17 31L13 34Z" fill="#dedede"/><circle cx="30" cy="31" r="6" stroke="#80bff3" stroke-width="2.2" fill="none"/></g>
<g transform="translate(130.0 1400.0)"><path d="M20 2V22" stroke="#dedede" stroke-width="3"/><path d="M12 22H28L33 34H7Z" fill="#f3cb6c"/></g>
<rect x="8" y="1462.0" width="164" height="2.2" fill="#262b34"/>
<path d="M8.6 1483.5H24.8L16.7 1491.5Z" fill="#f0f0f0"/>
<text x="34" y="1494.0" font-family="Liberation Sans" font-size="20" fill="#eef0f3">Text</text>
<g transform="translate(160 1487.0)"><circle r="6.5" fill="none" stroke="#f0f0f0" stroke-width="4" stroke-dasharray="3.2 1.9"/><circle r="5.5" fill="#f0f0f0"/><circle r="2.6" fill="#3b4452"/></g>
<g transform="translate(10.0 1518.0)"><text x="20" y="33" text-anchor="middle" font-family="Liberation Sans" font-size="36" fill="#dedede">A</text></g>
<g transform="translate(70.0 1518.0)"><text x="16" y="31" text-anchor="middle" font-family="Liberation Sans" font-size="32" fill="#dedede">A</text><g transform="translate(30 28) rotate(45)"><rect x="-2" y="-12" width="4" height="10" fill="#dedede"/><path d="M-5 -2H5L3 8H-3Z" fill="#c9965a"/></g></g>
<g transform="translate(130.0 1518.0)"><text x="20" y="31" text-anchor="middle" font-family="Liberation Sans" font-size="34" fill="#dedede">A</text><path d="M3 36H37" stroke="#80bff3" stroke-width="2.4"/></g>
<g transform="translate(10.0 1580.0)"><rect x="3" y="4" width="20" height="18" fill="#dedede"/><path d="M6 9H20M6 13H20M6 17H20" stroke="#3b4452" stroke-width="1.4"/><text x="24" y="38" text-anchor="middle" font-family="Liberation Sans" font-size="22" fill="#dedede">A</text><path d="M30 5H34V14M31 11L34 14L37 11" stroke="#dedede" stroke-width="2" fill="none"/></g>
<g transform="translate(70.0 1580.0)"><text x="20" y="16" text-anchor="middle" font-family="Liberation Sans" font-weight="bold" font-size="13" fill="#dedede">ABC</text><path d="M10 26L17 33L30 20" stroke="#6fcf7f" stroke-width="4.5" fill="none"/></g>
<g transform="translate(130.0 1580.0)"><circle cx="17" cy="17" r="13" stroke="#dedede" stroke-width="2.2" fill="none"/><text x="17" y="24" text-anchor="middle" font-family="Liberation Sans" font-size="19" fill="#dedede">A</text><path d="M26 26L35 35" stroke="#c9965a" stroke-width="4"/></g>
<g transform="translate(10.0 1643.0)"><rect x="4" y="4" width="17" height="16" fill="#eef3f8"/><path d="M7 8h2M11 8h8M7 12h2M11 12h8M7 16h2M11 16h8" stroke="#4a7fbf" stroke-width="1.8"/><text x="28" y="20" text-anchor="middle" font-family="Liberation Sans" font-weight="bold" font-size="16" fill="#80bff3">A</text><rect x="4" y="23" width="32" height="6" fill="#80bff3"/><rect x="4" y="31" width="32" height="6" fill="#dedede"/></g>
<g transform="translate(70.0 1643.0)"><text x="12" y="19" text-anchor="middle" font-family="Liberation Sans" font-weight="bold" font-size="16" fill="#80bff3">A</text><rect x="4" y="23" width="26" height="6" fill="#80bff3"/><rect x="4" y="31" width="26" height="6" fill="#dedede"/><path d="M24 10A6 6 0 0 1 35 8M35 13A6 6 0 0 1 24 15" stroke="#6fcf7f" stroke-width="2.2" fill="none"/><path d="M33 4L37 9L31 9Z M26 19L22 14L28 14Z" fill="#6fcf7f"/></g>
<g transform="translate(130.0 1643.0)"><text x="16" y="15" text-anchor="middle" font-family="Liberation Sans" font-weight="bold" font-size="12" fill="#dedede">PDF</text><path d="M10 20V28H17" stroke="#dedede" stroke-width="2.2" fill="none" stroke-width="2"/><path d="M15 25L19 28L15 31Z" fill="#dedede"/><text x="29" y="37" text-anchor="middle" font-family="Liberation Sans" font-size="21" fill="#80bff3">A</text></g>
<g transform="translate(10.0 1708.0)"><text x="13" y="15" text-anchor="middle" font-family="Liberation Sans" font-weight="bold" font-size="12" fill="#dedede">PDF</text><path d="M8 20V28H15" stroke="#dedede" stroke-width="2.2" fill="none" stroke-width="2"/><path d="M13 25L17 28L13 31Z" fill="#dedede"/><text x="25" y="37" text-anchor="middle" font-family="Liberation Sans" font-style="italic" font-size="21" fill="#dedede">A</text><path d="M26 34L35 24" stroke="#80bff3" stroke-width="3"/></g>
<rect x="8" y="1770.0" width="164" height="2.2" fill="#262b34"/>
<path d="M8.6 1791.5H24.8L16.7 1799.5Z" fill="#f0f0f0"/>
<text x="34" y="1802.0" font-family="Liberation Sans" font-size="20" fill="#eef0f3">Dimension</text>
<g transform="translate(160 1795.0)"><circle r="6.5" fill="none" stroke="#f0f0f0" stroke-width="4" stroke-dasharray="3.2 1.9"/><circle r="5.5" fill="#f0f0f0"/><circle r="2.6" fill="#3b4452"/></g>
<g transform="translate(10.0 1824.0)"><path d="M4 5V38M36 5V38M8 10H32" stroke="#dedede" stroke-width="2.2" fill="none"/><path d="M5 10L10 7V13Z M35 10L30 7V13Z" fill="#dedede"/><path d="M14 30L17 27M20 24V28M23 27L26 30M12 34H15M25 34H28" stroke="#f3cb6c" stroke-width="2.2"/></g>
<g transform="translate(70.0 1824.0)"><path d="M5 24V38M35 24V38M8 32H32" stroke="#dedede" stroke-width="2.2" fill="none"/><path d="M5 32L10 29V35Z M35 32L30 29V35Z" fill="#dedede"/><g transform="translate(28 16) rotate(45)"><rect x="-2" y="-12" width="4" height="10" fill="#dedede"/><path d="M-5 -2H5L3 8H-3Z" fill="#c9965a"/></g></g>
<g transform="translate(130.0 1824.0)"><path d="M5 4V38M34 4V38" stroke="#dedede" stroke-width="2.2" fill="none"/><path d="M8 12H31" stroke="#80bff3" stroke-width="2.2"/><path d="M6 12L12 8V16Z M33 12L27 8V16Z" fill="#80bff3"/><path d="M42 34V42H34Z" fill="#8c8f94"/></g>
<path d="M42 1878V1901M31 1889.5H54" stroke="#e6e6e6" stroke-width="2.2"/>
<path d="M88 1881H114M90 1888H114M88 1895H104M88 1902H114" stroke="#e6e6e6" stroke-width="3"/><path d="M106 1897L111 1891L116 1897Z" fill="#e6e6e6"/>
</svg>
<div id="rside" class="a"></div>
<div class="a" style="left:2894px;top:774px;width:46px;height:3px;background:#222833"></div>
<div class="a" style="left:2894px;top:1318px;width:46px;height:3px;background:#222833"></div>
<div class="a" style="left:2912px;top:501px;width:0;height:0"><div style="position:absolute;left:0;top:0;transform:translate(-50%,-50%) rotate(-90deg);font-size:25px;letter-spacing:-0.3px;color:#d6d9de;white-space:nowrap">Layers and Properties</div></div>
<div class="a" style="left:2912px;top:1046px;width:0;height:0"><div style="position:absolute;left:0;top:0;transform:translate(-50%,-50%) rotate(-90deg);font-size:25px;letter-spacing:-0.3px;color:#d6d9de;white-space:nowrap">Reference Manager</div></div>
<div class="a" style="left:2912px;top:1590px;width:0;height:0"><div style="position:absolute;left:0;top:0;transform:translate(-50%,-50%) rotate(-90deg);font-size:25px;letter-spacing:-0.3px;color:#d6d9de;white-space:nowrap">Blocks</div></div>
<div class="a" style="left:2896px;top:1547px;width:20px;height:20px;border-radius:50%;background:#e6773d;border:2px solid #f8e8e0"></div>
<div id="status" class="a"></div>
<div class="a" style="left:181px;top:1866px;width:119px;height:43px;background:#394250;border-left:2px solid #252a32"></div>
<div class="a" style="left:181px;top:1874px;width:119px;text-align:center;font-size:23px;color:#b9bcc2;font-weight:normal;white-space:nowrap">Model</div>
<div class="a" style="left:300px;top:1866px;width:46px;height:43px;background:#394250;border-left:2px solid #252a32"></div>
<svg class="a" style="left:313px;top:1877px" width="22" height="22" viewBox="0 0 22 22"><path d="M11 0V22M0 11H22" stroke="#d0d0d0" stroke-width="2"/></svg>
<div class="a" style="left:346px;top:1866px;width:118px;height:43px;background:#394250;border-left:2px solid #252a32"></div>
<div class="a" style="left:346px;top:1874px;width:118px;text-align:center;font-size:23px;color:#b9bcc2;font-weight:normal;white-space:nowrap">a3</div>
<div class="a" style="left:464px;top:1866px;width:159px;height:43px;background:#394250;border-left:2px solid #252a32"></div>
<div class="a" style="left:464px;top:1874px;width:159px;text-align:center;font-size:23px;color:#b9bcc2;font-weight:normal;white-space:nowrap">escala&#8230;-1000</div>
<div class="a" style="left:623px;top:1866px;width:146px;height:43px;background:#4d586b;border-left:2px solid #252a32"></div>
<div class="a" style="left:623px;top:1874px;width:146px;text-align:center;font-size:23px;color:#f4f5f7;font-weight:bold;white-space:nowrap">escal&#8230;1-100</div>
<div class="a" style="left:769px;top:1866px;width:2px;height:43px;background:#252a32"></div>
<div class="a" style="left:1992px;top:1866px;width:2px;height:44px;background:#252a32"></div>
<div class="a" style="left:2013px;top:1872px;font-size:24px;color:#c9ccd2;white-space:nowrap;letter-spacing:-0.2px">-0.250, 0.213 , 0.000</div>
<div class="a" style="left:2330px;top:1868px;width:40px;height:40px;background:#6a8dc2"></div>
<div class="a" style="left:2462px;top:1868px;width:40px;height:40px;background:#6a8dc2"></div>
<div class="a" style="left:2506px;top:1868px;width:39px;height:40px;background:#6a8dc2"></div>
<div class="a" style="left:2595px;top:1868px;width:39px;height:40px;background:#6a8dc2"></div>
<svg class="a" style="left:2242px;top:1868px" width="40" height="40" viewBox="0 0 40 40"><rect x="4" y="5" width="32" height="31" fill="#dadada"/><path d="M7 8L7 33L30 33Z" fill="#222"/><path d="M12 8V33M18 8V33M24 8V33M30 8V33M7 13H33M7 19H33M7 25H33M7 31H33" stroke="#777" stroke-width="1.2"/></svg>
<svg class="a" style="left:2286px;top:1868px" width="40" height="40" viewBox="0 0 40 40"><path d="M4 4V36H36" stroke="#d9d9d9" stroke-width="2.4" fill="none"/><rect x="4" y="26" width="10" height="10" fill="none" stroke="#d9d9d9" stroke-width="2.2"/></svg>
<svg class="a" style="left:2330px;top:1868px" width="40" height="40" viewBox="0 0 40 40"><circle cx="17" cy="22" r="12" fill="none" stroke="#f2f2f2" stroke-width="2.4"/><path d="M17 22L35 10M5 22H36" stroke="#f2f2f2" stroke-width="2.4"/></svg>
<svg class="a" style="left:2374px;top:1868px" width="40" height="40" viewBox="0 0 40 40"><path d="M4 10H16M10 4V16" stroke="#d9d9d9" stroke-width="2.2"/><rect x="14" y="22" width="22" height="9" fill="#d9d9d9"/></svg>
<svg class="a" style="left:2418px;top:1868px" width="40" height="40" viewBox="0 0 40 40"><rect x="3" y="6" width="34" height="6" fill="#d9d9d9"/><rect x="3" y="16" width="30" height="6" fill="#d9d9d9"/><rect x="3" y="26" width="26" height="6" fill="#d9d9d9"/><rect x="3" y="10" width="34" height="2" fill="#888"/></svg>
<svg class="a" style="left:2462px;top:1868px" width="40" height="40" viewBox="0 0 40 40"><rect x="6" y="6" width="28" height="28" fill="#eee"/><path d="M6 6h4v4h-4zM14 6h4v4h-4zM22 6h4v4h-4zM30 6h4v4h-4zM10 10h4v4h-4zM18 10h4v4h-4zM26 10h4v4h-4zM6 14h4v4h-4zM14 14h4v4h-4zM22 14h4v4h-4zM30 14h4v4h-4zM10 18h4v4h-4zM18 18h4v4h-4zM26 18h4v4h-4zM6 22h4v4h-4zM14 22h4v4h-4zM22 22h4v4h-4zM30 22h4v4h-4zM10 26h4v4h-4zM18 26h4v4h-4zM26 26h4v4h-4zM6 30h4v4h-4zM14 30h4v4h-4zM22 30h4v4h-4zM30 30h4v4h-4z" fill="#555"/></svg>
<svg class="a" style="left:2506px;top:1868px" width="40" height="40" viewBox="0 0 40 40"><path d="M10 5H6V35H10M24 5H28V14" stroke="#f2f2f2" stroke-width="2.4" fill="none"/><rect x="12" y="8" width="9" height="8" fill="none" stroke="#f2f2f2" stroke-width="2"/><circle cx="17" cy="25" r="4" fill="none" stroke="#f2f2f2" stroke-width="2"/><path d="M24 20V38L28 34L31 39L34 37L31 32H37Z" fill="#f2f2f2"/></svg>
<svg class="a" style="left:2550px;top:1868px" width="40" height="40" viewBox="0 0 40 40"><path d="M4 34H34M4 34L30 10" stroke="#d9d9d9" stroke-width="2.4"/><path d="M14 34A12 12 0 0 0 10 26" stroke="#d9d9d9" stroke-width="2" fill="none"/></svg>
<svg class="a" style="left:2594px;top:1868px" width="40" height="40" viewBox="0 0 40 40"><rect x="8" y="10" width="28" height="26" fill="none" stroke="#f2f2f2" stroke-width="2.4"/><rect x="3" y="3" width="9" height="9" fill="#6a8dc2" stroke="#f2f2f2" stroke-width="2"/></svg>
<svg class="a" style="left:2637px;top:1868px" width="40" height="40" viewBox="0 0 40 40"><path d="M28 6L16 20L28 34Z" fill="#7d838c"/></svg>
<svg class="a" style="left:2676px;top:1868px" width="40" height="40" viewBox="0 0 40 40"><path d="M4 14V4H14M26 4H36V14M36 26V36H26M14 36H4V26" stroke="#d9d9d9" stroke-width="2.2" fill="none" stroke-dasharray="4 3"/><rect x="12" y="14" width="16" height="14" fill="none" stroke="#d9d9d9" stroke-width="2.2"/><path d="M6 6L12 12M5 10V5H10" stroke="#d9d9d9" stroke-width="2" fill="none"/></svg>
<svg class="a" style="left:2714px;top:1868px" width="40" height="40" viewBox="0 0 40 40"><path d="M12 6L24 20L12 34Z" fill="#7d838c"/></svg>
<svg class="a" style="left:2758px;top:1868px" width="40" height="40" viewBox="0 0 40 40"><path d="M20 4L32 36L20 28L8 36Z" fill="#d9d9d9"/><circle cx="31" cy="8" r="5" fill="none" stroke="#d9d9d9" stroke-width="2"/></svg>
<svg class="a" style="left:2800px;top:1868px" width="40" height="40" viewBox="0 0 40 40"><path d="M18 6L30 36L18 28L6 36Z" fill="#d9d9d9"/><path d="M30 2L26 10H31L27 18" stroke="#f3cb6c" stroke-width="2.4" fill="none"/></svg>
<svg class="a" style="left:2845px;top:1868px" width="40" height="40" viewBox="0 0 40 40"><rect x="3" y="3" width="14" height="14" fill="none" stroke="#d9d9d9" stroke-width="2"/><circle cx="31" cy="10" r="6" fill="none" stroke="#d9d9d9" stroke-width="2"/><path d="M20 22L28 36H12Z" fill="none" stroke="#d9d9d9" stroke-width="2"/></svg>
<svg class="a" style="left:2890px;top:1868px" width="40" height="40" viewBox="0 0 40 40"><g transform="translate(20 20)"><circle r="12" fill="none" stroke="#d9d9d9" stroke-width="7" stroke-dasharray="5 4.4"/><circle r="11" fill="#d9d9d9"/><circle r="5" fill="#394250"/></g></svg>
<div id="paper" class="a"><svg class="a" style="left:0;top:0" width="1086" height="1536" viewBox="0 0 1086 1536">
<defs><clipPath id="cA"><rect x="-2" y="-2" width="550" height="381"/></clipPath><clipPath id="cB"><rect x="536" y="-2" width="554" height="381"/></clipPath><clipPath id="cC"><rect x="-2" y="367" width="550" height="392"/></clipPath><clipPath id="cD"><rect x="536" y="367" width="554" height="392"/></clipPath><clipPath id="cE"><rect x="-2" y="747" width="550" height="392"/></clipPath><clipPath id="cF"><rect x="536" y="747" width="554" height="392"/></clipPath><clipPath id="cG"><rect x="-2" y="1127" width="550" height="413"/></clipPath><clipPath id="cH"><rect x="536" y="1127" width="554" height="413"/></clipPath></defs>
<g fill="none" stroke-linejoin="round" stroke-linecap="round">
<g clip-path="url(#cA)"><path stroke="#6a6a6a" stroke-width="1.5" d="M547.0 82.2 L536.9 85.1 L524.7 97.4 L516.1 112.1 L508.7 134.2 L502.6 164.9 L496.4 187.0 L495.2 191.9 L503.8 204.2 L514.8 215.2 L518.5 226.2 L519.8 234.8 L517.3 243.4 M159.0 258.2 L163.9 250.8 L165.9 237.3 L168.8 232.4 L193.3 217.7 L208.1 209.1 L228.9 199.2 L251.0 191.9 L286.6 185.0 L305.0 184.5 L312.4 185.8 L317.3 194.3 L323.4 205.4 L332.0 215.2 M220.3 329.3 L225.2 325.6 L230.2 317.1 L236.3 312.1 L255.9 306.7 L279.2 300.4 L311.1 293.2 L314.8 296.2 L320.5 303.1 L338.1 304.3"/><path stroke="#151515" stroke-width="1.7" d="M0.7 98.6 L112.4 -0.8 M0.7 139.9 L133.2 20.1 L119.7 6.6 L127.1 -0.8 M135.7 7.8 L144.3 -0.8 M135.7 7.8 L140.6 14.0 L157.8 -0.8 M333.2 -0.8 L308.7 22.5 L309.2 31.1 L312.4 38.5 L319.7 44.6 L437.5 84.4 L446.1 84.4 L454.0 81.4 L461.6 76.5 L465.0 69.2 L464.5 59.4 L457.9 50.8 L404.4 -0.8 M547.0 204.2 L384.8 146.5 L372.5 145.3 L357.8 145.3 L341.8 152.1 L327.1 162.9 L316.1 177.2 L312.4 185.8 L308.2 194.3 L306.2 214.0 L317.3 377.9 M547.0 252.0 L376.2 194.3 L370.0 195.1 L360.2 200.0 L352.9 207.1 L344.3 220.1 M332.0 215.2 L344.3 220.1 L448.6 297.4 L471.9 313.4 M332.0 215.2 L338.1 306.0 L365.1 315.8 L421.6 346.5 L462.1 344.1 L471.9 313.4 L479.3 291.3 L498.9 236.1 M448.6 297.4 L453.0 282.2 L479.3 291.3 M365.1 315.8 L371.3 377.9 M547.0 254.5 L507.5 377.9 M507.5 369.8 L536.9 377.9 M0.7 328.1 L113.6 225.0 L123.4 218.4 L135.7 214.0 L146.7 218.9 L199.5 271.7 L230.2 314.6 L242.4 341.6 L245.4 377.9 M0.7 369.1 L143.5 241.0 L219.1 323.2 L222.8 377.9"/></g>
<g clip-path="url(#cB)"><path stroke="#6a6a6a" stroke-width="1.5" d="M537.0 85.9 L556.6 79.5 L576.3 70.7 L609.4 46.4 L624.2 33.1 L636.4 26.2 L640.6 21.8 L642.6 11.5 L642.1 -0.8"/><path stroke="#151515" stroke-width="1.7" d="M629.1 -0.8 L669.6 34.8 L675.7 37.8 L684.3 37.8 L696.6 34.8 L705.2 28.7 L711.3 18.9 L718.7 -0.8 M691.7 -0.8 L880.7 144.8 M758.0 -0.8 L738.3 56.9 L737.1 68.0 L740.3 87.6 L745.7 96.2 L755.5 104.1 L767.8 111.4 L823.0 142.4 L883.2 171.8 L934.7 193.9 L985.0 214.0 L1085.7 244.7 M880.7 144.8 L1024.3 198.8 L1085.7 216.5 M880.7 144.8 L928.6 -0.8 M1024.3 198.8 L1085.7 27.5 M1075.9 59.9 L1085.7 63.1 M537.0 201.8 L702.7 260.7 L719.9 270.0 L731.0 279.1 L744.5 295.1 L750.1 306.8 L755.5 327.0 L758.0 339.3 L760.4 356.4 L761.1 378.0 M537.0 248.4 L689.2 301.2 L707.6 309.1 L719.9 319.6 L728.5 331.9 L733.4 344.2 L734.6 354.0 L735.9 378.0 M548.8 253.3 L537.0 287.7 M853.7 378.0 L866.0 356.4 L875.8 344.9 L883.2 340.5 L896.7 338.0 L907.7 338.8 L1024.3 378.0 M874.6 378.0 L884.4 372.4 L893.0 369.5 L902.8 369.9 L927.4 378.0"/><path stroke="#7a7a7a" stroke-width="2.5" stroke-dasharray="7 9" d="M730.5 279.1 L733.4 378.0 M730.5 279.1 L867.2 356.4"/></g>
<g clip-path="url(#cC)"><path stroke="#6a6a6a" stroke-width="1.5" d="M235.1 524.2 L248.9 522.2 L251.5 517.9 L252.7 511.6 L259.0 509.1 L269.1 507.8 L324.5 507.8 L335.9 512.9 L344.7 524.2 L354.8 543.1 L358.5 555.7 L362.3 579.6 M245.2 631.3 L254.0 628.8 L261.5 622.0 L267.8 619.9 L332.1 618.7 L344.7 622.5 L353.5 623.7 M261.5 737.1 L269.1 735.8 L275.4 729.5 L342.2 729.0 L348.5 734.6 L366.1 738.4 M465.6 641.4 L466.9 654.0 L463.1 667.8"/><path stroke="#151515" stroke-width="1.7" d="M221.2 368.0 L235.1 531.8 L245.2 632.5 L251.5 705.6 L256.5 705.1 L265.3 758.0 M243.9 368.0 L281.7 758.0 M317.0 368.0 L343.4 758.0 M369.9 368.0 L381.7 478.9 M327.1 488.4 L336.6 486.4 L354.8 579.6 M327.1 488.9 L369.4 696.8 L363.6 697.5 L367.4 758.0 M225.8 418.4 L233.8 414.6 L241.4 405.8 L247.7 401.5 L259.0 400.8 L318.2 400.2 L324.5 404.5 L333.3 414.6 L339.6 419.6 L374.9 418.4 M0.8 647.7 L120.5 541.3 L235.1 533.0 M143.1 540.6 L143.1 583.4 L85.2 589.2 L135.1 725.8 M111.6 655.2 L245.2 634.6 M135.1 725.8 L251.5 705.6 M0.8 748.4 L41.8 711.9 L117.4 681.7 M61.2 758.0 L135.1 725.8 M381.7 478.9 L482.5 470.0 L489.6 494.0 L483.3 497.8 L499.6 551.4 L422.8 567.8 L382.5 480.9 L364.8 482.6 L402.6 560.7 L392.6 567.0 L436.6 659.0 M345.9 585.2 L392.6 567.0 M386.3 526.7 L399.6 519.2 M390.0 534.3 L403.1 527.2 M395.1 541.8 L406.4 535.5 M373.7 514.1 L380.0 512.1 M436.6 659.0 L363.6 670.3 M436.6 659.0 L489.6 679.9 L502.2 758.0 M482.0 470.0 L504.7 378.1 M365.3 724.5 L495.9 711.9 M536.2 674.1 L547.0 674.1 M536.2 674.1 L539.9 723.2 L547.0 723.2"/><path stroke="#7a7a7a" stroke-width="2.5" stroke-dasharray="7 9" d="M504.7 378.1 L519.8 407.1"/></g>
<g clip-path="url(#cD)"><path stroke="#6a6a6a" stroke-width="1.5" d="M839.3 725.7 L892.2 724.5 M573.5 583.4 L581.1 590.9 L594.9 630.0 L602.0 657.7 L601.2 667.8 M600.0 665.3 L569.7 758.0"/><path stroke="#151515" stroke-width="1.7" d="M537.0 379.3 L558.4 387.6 L614.6 500.3 L625.7 583.4 M537.0 438.5 L610.1 583.4 L635.2 734.5 L763.7 727.7 M662.5 734.5 L655.4 758.0 M610.1 583.9 L748.6 573.3 M734.8 368.0 L747.3 538.0 L765.0 730.8 L767.5 758.0 M759.9 368.0 L770.0 538.0 M747.3 538.0 L828.7 535.0 L840.6 739.6 L841.3 758.0 M765.0 743.3 L840.6 739.6 M867.0 379.3 L896.0 758.0 M851.9 393.2 L869.5 389.4 L874.6 379.3 L884.6 371.8 L894.7 369.3 L903.5 370.0 L1086.2 430.5 M860.7 368.0 L853.9 378.1 L851.9 393.2 M990.4 368.0 L1086.2 398.7 M537.0 674.1 L578.6 671.0 L576.0 721.9 L540.0 723.7 L537.0 674.1 M538.3 675.8 L576.0 721.9 M578.6 671.0 L540.0 723.7 M577.3 656.4 L589.4 655.2 L589.9 665.3 L599.5 665.8 L603.8 706.8 L583.6 708.1 L577.3 656.4 M578.6 657.7 L603.8 706.8 M599.5 665.8 L583.6 708.1 M576.0 710.6 L630.2 705.1 L635.2 734.5 M576.0 710.6 L577.3 758.0 M576.0 710.6 L621.4 738.3 M630.2 705.1 L577.3 743.3 M577.3 743.3 L621.4 738.3 L623.9 758.0 M621.4 716.9 L631.5 716.4 M621.4 716.9 L639.0 758.0"/></g>
<g clip-path="url(#cE)"><path stroke="#6a6a6a" stroke-width="1.5" d="M262.8 862.6 L269.1 861.4 L276.7 857.6 L283.0 847.5 L288.0 845.0 L347.2 847.0 L352.2 853.8 L359.8 861.4 L367.4 863.1 L377.4 863.4 M221.2 1105.8 L232.6 1095.2 L283.0 1080.6 L296.8 1073.0 L304.4 1071.8 L354.8 1076.8 L364.8 1078.1 L372.4 1085.6 L381.2 1090.6 M221.2 1105.8 L232.6 1138.0"/><path stroke="#151515" stroke-width="1.7" d="M0.8 788.3 L60.0 759.3 L86.4 748.0 M52.4 764.4 L54.9 770.2 M0.8 782.0 L5.8 787.1 M61.2 759.3 L83.9 845.0 L94.0 921.8 M264.1 748.0 L271.6 788.3 L83.9 845.0 M0.8 877.8 L83.9 845.0 M57.5 856.3 L59.5 862.6 M0.8 856.3 L8.3 874.0 M257.8 793.4 L262.8 880.3 M20.9 942.0 L284.2 876.5 L292.3 1007.5 L270.4 1003.0 L274.1 1074.3 L54.9 1138.0 M18.4 1073.0 L33.5 1138.0 M18.4 1073.0 L99.0 1052.9 M109.1 1138.0 L279.2 1090.6 L299.3 1078.1 L308.2 1062.9 L310.7 1034.0 L309.4 1012.5 L280.4 748.0 M0.8 909.2 L17.2 934.4 L41.1 993.6 L44.9 997.4 L288.0 937.0 M0.8 942.0 L17.2 934.9 M109.1 919.3 L121.7 976.0 M259.0 882.8 L267.8 942.0 M0.8 1007.5 L41.1 993.6 M83.9 986.1 L99.0 1052.9 M0.8 1002.5 L18.4 1073.0 M342.2 748.0 L359.8 1050.3 L374.9 1138.0 M367.4 748.0 L371.1 829.9 L509.7 812.2 M374.9 887.8 L382.5 1138.0 M376.2 829.9 L378.7 887.8 M377.4 887.8 L521.0 875.2 M377.4 964.7 L533.6 949.6 M378.7 1018.8 L546.2 997.4 M382.5 1119.6 L547.0 1080.6 M500.9 748.0 L547.0 1012.5 M536.2 788.3 L547.0 788.3 M536.2 788.3 L547.0 795.9 M289.3 969.7 L294.3 965.9 L298.1 958.4 L308.2 957.1 L353.5 953.3 L359.8 957.1 L367.4 962.2 L377.4 964.7"/></g>
<g clip-path="url(#cF)"><path stroke="#6a6a6a" stroke-width="1.5" d="M652.9 1022.6 L668.0 1042.7 L675.6 1098.2 M1040.8 1008.7 L1048.4 1020.1 L1049.6 1100.7 L1044.6 1110.8 M569.7 748.0 L552.1 823.6"/><path stroke="#151515" stroke-width="1.7" d="M538.3 788.3 L627.7 778.2 L632.2 828.1 L542.0 834.9 L538.3 788.3 M581.1 782.0 L588.6 831.1 M538.3 789.6 L588.6 831.1 M581.1 782.0 L542.0 834.9 M581.1 782.0 L632.2 828.1 M627.7 778.2 L588.6 831.1 M577.3 748.0 L581.1 782.0 M583.6 748.0 L623.9 777.0 M623.9 748.0 L582.3 780.7 M623.9 748.0 L632.7 828.6 M661.7 748.0 L668.0 828.1 M632.7 748.0 L668.0 828.1 M661.7 748.0 L632.7 828.1 M632.2 829.9 L753.6 823.1 M542.0 834.9 L549.1 877.7 M552.1 894.1 L600.0 891.1 L605.0 939.5 L553.4 943.2 L550.9 895.4 M550.9 879.0 L634.0 872.7 M632.2 829.9 L637.8 933.2 L783.4 914.3 M765.0 748.0 L778.3 866.4 L783.4 914.3 L785.1 929.4 L788.4 1012.5 L698.2 1018.8 L615.1 1025.1 L588.6 991.9 L698.2 982.3 M698.2 925.6 L698.7 1018.8 M778.3 867.7 L864.5 861.4 L867.0 925.6 L785.1 929.4 M839.3 748.0 L848.1 862.6 M894.7 748.0 L912.3 974.7 L945.1 1005.0 L1086.2 1010.0 M912.3 976.0 L914.9 989.8 L922.4 1005.0 L937.5 1016.3 L1086.2 1021.3 M1032.0 872.7 L1086.2 871.4 M1032.0 872.7 L1019.4 1008.7 M865.7 925.6 L867.0 1007.5 M868.3 1057.9 L872.0 1138.0 M537.0 962.1 L572.3 1118.3 M537.0 997.4 L545.8 997.4 M537.0 1084.3 L562.2 1078.0 M698.2 1069.2 L785.1 1067.9 L804.0 1138.0 M698.2 1069.2 L702.0 1100.7 L670.5 1100.7 L671.8 1138.0 M942.6 1093.1 L1086.2 1098.2 M942.6 1093.1 L933.8 1100.7 L926.2 1138.0 M930.0 1107.0 L1086.2 1112.0"/><path stroke="#7a7a7a" stroke-width="2.5" stroke-dasharray="7 9" d="M635.2 758.1 L632.7 808.5 M553.4 943.2 L768.8 929.4"/><path stroke="#000" stroke-width="5" d="M549.1 879.0 L550.1 904.2"/></g>
<g clip-path="url(#cG)"><path stroke="#6a6a6a" stroke-width="1.5" d="M227.2 1128.0 L245.8 1177.2 L246.6 1186.5 L284.4 1201.2 L297.7 1201.2 L305.7 1195.9 L312.3 1187.9 L325.6 1183.9 L369.5 1178.0 L382.8 1180.7 M325.6 1304.9 L332.3 1295.6 L340.3 1293.0 L406.8 1283.7 L413.4 1285.0 L422.7 1294.3 L436.0 1319.6 M350.9 1391.4 L357.5 1383.4 L429.4 1379.5 L434.7 1383.4 L441.4 1384.8"/><path stroke="#151515" stroke-width="1.7" d="M31.6 1128.0 L35.6 1142.6 L87.5 1128.0 M1.0 1153.3 L35.6 1142.6 M1.0 1170.0 L156.7 1126.9 M1.0 1233.1 L265.7 1157.8 L276.4 1156.7 L287.0 1158.6 L297.7 1165.3 L307.0 1177.2 L324.3 1230.4 L372.2 1404.7 M1.0 1252.5 L220.5 1189.2 L243.1 1187.9 L261.8 1190.5 L284.4 1202.5 L300.3 1217.1 L305.7 1229.1 L354.9 1404.7 M71.0 1233.1 L115.4 1402.1 M106.1 1364.3 L192.6 1340.9 L201.9 1376.8 M1.0 1436.7 L334.9 1336.9 M264.4 1359.5 L275.1 1404.7 M148.7 1393.6 L151.3 1404.7 M372.2 1128.0 L425.4 1338.2 L446.7 1404.7 M382.8 1128.0 L385.5 1166.6 M1.0 1535.1 L83.5 1517.8 L88.8 1532.5"/></g>
<g clip-path="url(#cH)"><path stroke="#6a6a6a" stroke-width="1.5" d="M580.9 1146.6 L594.2 1144.5 L670.1 1141.3 M635.5 1314.3 L687.4 1314.3 M646.1 1357.4 L690.0 1356.9 M948.2 1286.4 L944.2 1301.0 L936.2 1323.6 L909.6 1340.9 L897.6 1354.2 L868.4 1404.8"/><path stroke="#151515" stroke-width="1.7" d="M670.1 1128.0 L672.7 1163.9 L679.4 1214.5 L686.0 1233.1 L687.4 1273.1 L694.0 1404.8 M672.7 1163.9 L793.8 1162.1 L797.8 1265.1 L686.0 1273.1 M679.4 1214.5 L726.5 1212.6 L726.5 1229.7 L686.0 1233.1 M793.8 1150.6 L807.2 1149.3 L881.7 1148.8 M793.8 1150.6 L801.8 1348.9 M800.5 1128.0 L807.2 1150.6 M871.0 1128.0 L881.7 1282.4 L884.3 1342.3 L690.0 1356.4 M824.5 1330.3 L881.7 1326.3 M824.5 1330.3 L825.3 1346.3 M847.1 1346.3 L848.4 1363.6 L816.5 1367.5 L817.8 1387.5 L821.3 1387.5 L821.8 1404.8 M789.9 1350.2 L792.0 1404.8 M928.3 1128.0 L909.6 1281.0 L1086.6 1297.8 M914.9 1148.0 L925.6 1148.0 M909.6 1281.0 L932.2 1355.6 L989.5 1360.9 L996.1 1310.3 L1086.6 1318.3 M610.2 1273.1 L627.5 1265.1 L654.1 1259.0 L686.0 1258.4 M611.5 1275.7 L635.5 1318.3 L644.8 1348.9 L648.8 1372.9 L618.2 1375.5 L622.2 1404.8 M559.6 1289.0 L590.2 1383.5 L592.9 1404.8 M557.0 1400.8 L590.2 1395.5"/><path stroke="#7a7a7a" stroke-width="2.5" stroke-dasharray="7 9" d="M880.3 1282.4 L909.6 1281.0"/></g>
<path stroke="#000" stroke-width="8" stroke-linejoin="miter" d="M386.8 1170.3 L571.3 1121.6 L605.4 1266.4 L429.0 1329.4 Z"/>
</g>
<g font-family="Liberation Sans" font-size="32.5" fill="#b28e6a">
<text transform="translate(142.8 85.9) scale(0.9 1)">77.7</text>
<text transform="translate(417.6 381.6) scale(0.9 1)">93.1</text>
<text transform="translate(935.7 76.1) scale(0.9 1)">99.5</text>
<text transform="translate(811.7 243.5) scale(0.9 1)">78.2</text>
<text transform="translate(96.3 428.0) scale(0.9 1)">92.0</text>
<text transform="translate(198.3 591.7) scale(0.9 1)">80.1</text>
<text transform="translate(33.3 647.7) scale(0.9 1)">76.1</text>
<text transform="translate(415.0 743.4) scale(0.9 1)">83.6</text>
<text transform="translate(498.1 708.1) scale(0.9 1)">76.7</text>
<text transform="translate(646.3 466.2) scale(0.9 1)">98.5</text>
<text transform="translate(788.7 494.0) scale(0.9 1)">78.2</text>
<text transform="translate(1007.8 472.5) scale(0.9 1)">94.0</text>
<text transform="translate(744.6 659.0) scale(0.9 1)">87.9</text>
<text transform="translate(1000.3 732.0) scale(0.9 1)">90.6</text>
<text transform="translate(10.6 828.1) scale(0.9 1)">74.3</text>
<text transform="translate(156.7 863.9) scale(0.9 1)">86.3</text>
<text transform="translate(166.8 928.1) scale(0.9 1)">81.8</text>
<text transform="translate(-0.7 968.5) scale(0.9 1)">8.6</text>
<text transform="translate(140.4 991.1) scale(0.9 1)">82.0</text>
<text transform="translate(60.5 1054.1) scale(0.9 1)">83.4</text>
<text transform="translate(430.1 794.6) scale(0.9 1)">82.9</text>
<text transform="translate(456.6 843.7) scale(0.9 1)">79.2</text>
<text transform="translate(444.0 924.4) scale(0.9 1)">82.3</text>
<text transform="translate(442.7 982.3) scale(0.9 1)">81.5</text>
<text transform="translate(444.0 1055.4) scale(0.9 1)">83.8</text>
<text transform="translate(450.3 1119.6) scale(0.9 1)">80.9</text>
<text transform="translate(140.4 758.1) scale(0.9 1)">89.2</text>
<text transform="translate(771.0 792.1) scale(0.9 1)">86.5</text>
<text transform="translate(753.4 836.2) scale(0.9 1)">85.3</text>
<text transform="translate(550.6 832.4) scale(0.9 1)">80.6</text>
<text transform="translate(667.8 880.3) scale(0.9 1)">84.2</text>
<text transform="translate(560.7 939.5) scale(0.9 1)">80.2</text>
<text transform="translate(752.1 954.6) scale(0.9 1)">81.9</text>
<text transform="translate(868.0 1041.5) scale(0.9 1)">77.4</text>
<text transform="translate(583.4 1069.2) scale(0.9 1)">76.5</text>
<text transform="translate(706.8 1128.4) scale(0.9 1)">85.1</text>
<text transform="translate(1054.4 942.0) scale(0.9 1)">85</text>
<text transform="translate(128.5 1296.2) scale(0.9 1)">84.7</text>
<text transform="translate(-0.5 1366.1) scale(0.9 1)">6.5</text>
<text transform="translate(493.1 1342.2) scale(0.9 1)">80.4</text>
<text transform="translate(999.9 1207.8) scale(0.9 1)">91.1</text>
<text transform="translate(824.3 1246.4) scale(0.9 1)">85.4</text>
<text transform="translate(720.5 1309.0) scale(0.9 1)">84.6</text>
<text transform="translate(719.2 1386.2) scale(0.9 1)">84.0</text>
<text transform="translate(1065.2 1451.4) scale(0.9 1)">78</text>
</g>
<g font-family="Liberation Sans" font-size="32" fill="#3a3a3a" text-anchor="middle" dominant-baseline="central">
<text transform="translate(886.0 895.5) rotate(90.0)" letter-spacing="2">Pátio</text>
<text transform="translate(1026.5 1055.0) rotate(0.0)" letter-spacing="0">do</text>
<text transform="translate(629.0 1176.0) rotate(75.0)" letter-spacing="3">Alto&#160;&#160;do&#160;&#160;Longo</text>
</g></svg></div>
<svg class="a" style="left:0;top:0" width="2940" height="1912" viewBox="0 0 2940 1912" style="pointer-events:none">
<path d="M212.8 1659.3V1830.8H313.5Z M212.8 1815H229V1830.8 M216.6 1710.8L229 1723.6L241.9 1711 M229 1723.6V1735.8 M268.2 1802.8L293.4 1827.5 M293.4 1802.8L268.2 1827.5" fill="none" stroke="#2b4fe6" stroke-width="2.2"/>
<path d="M596 1542.3H662.5M674.5 1542.3H741M668.5 1470V1536.3M668.5 1548.3V1615" stroke="#111" stroke-width="2"/><rect x="662.5" y="1536.3" width="12" height="12" fill="none" stroke="#111" stroke-width="2"/>
</svg>
<div class="a" style="left:1115px;top:1686px;width:921px;height:128px;background:#3a4351"></div>
<div class="a cmdt" style="top:1695px;font-size:22px;letter-spacing:-0.37px">Command: _LAYOUT</div>
<div class="a cmdt" style="top:1725px;font-size:22px;letter-spacing:-0.37px">Enter layout option [Copy/Delete/New/Template/Rename/SAveas/Set/?] &lt;set&gt;: _S</div>
<div class="a cmdt" style="top:1755px;font-size:22px;letter-spacing:-0.37px">Enter layout to make current &lt;escala_1-1000&gt;: escala_1-100</div>
<div class="a cmdt" style="top:1785px;font-size:22px;letter-spacing:-0.37px">Restoring cached viewports - Regenerating layout.</div>
<div class="a" style="left:2018px;top:1769px;width:7px;height:41px;border-radius:4px;background:#9a9ea6"></div>
<div class="a" style="left:1036px;top:1814px;width:1000px;height:50px;background:#3a4351"></div>
<div class="a" style="left:1050px;top:1820px;font-size:22px;color:#d9d9d9;font-family:'Liberation Mono'">&gt;_</div>
<div class="a" style="left:1084px;top:1834px;width:0;height:0;border-left:5px solid transparent;border-right:5px solid transparent;border-top:7px solid #d9d9d9"></div>
<div class="a" style="left:1126px;top:1825px;font-size:23px;font-style:italic;color:#8f949c;white-space:nowrap">Type a command</div>
<div class="a" style="left:1954px;top:1836px;width:0;height:0;border-left:6px solid transparent;border-right:6px solid transparent;border-top:8px solid #8a8f97"></div>
<svg class="a" style="left:1988px;top:1822px" width="28" height="30" viewBox="0 0 28 30"><path d="M8 12H2V28H26V12H20M13 4V22" stroke="#e0e0e0" stroke-width="2.2" fill="none"/><path d="M8 8L13 2L18 8Z" fill="#7dbdf5"/><path d="M13 4V16" stroke="#7dbdf5" stroke-width="2.2"/></svg>
</body></html>
